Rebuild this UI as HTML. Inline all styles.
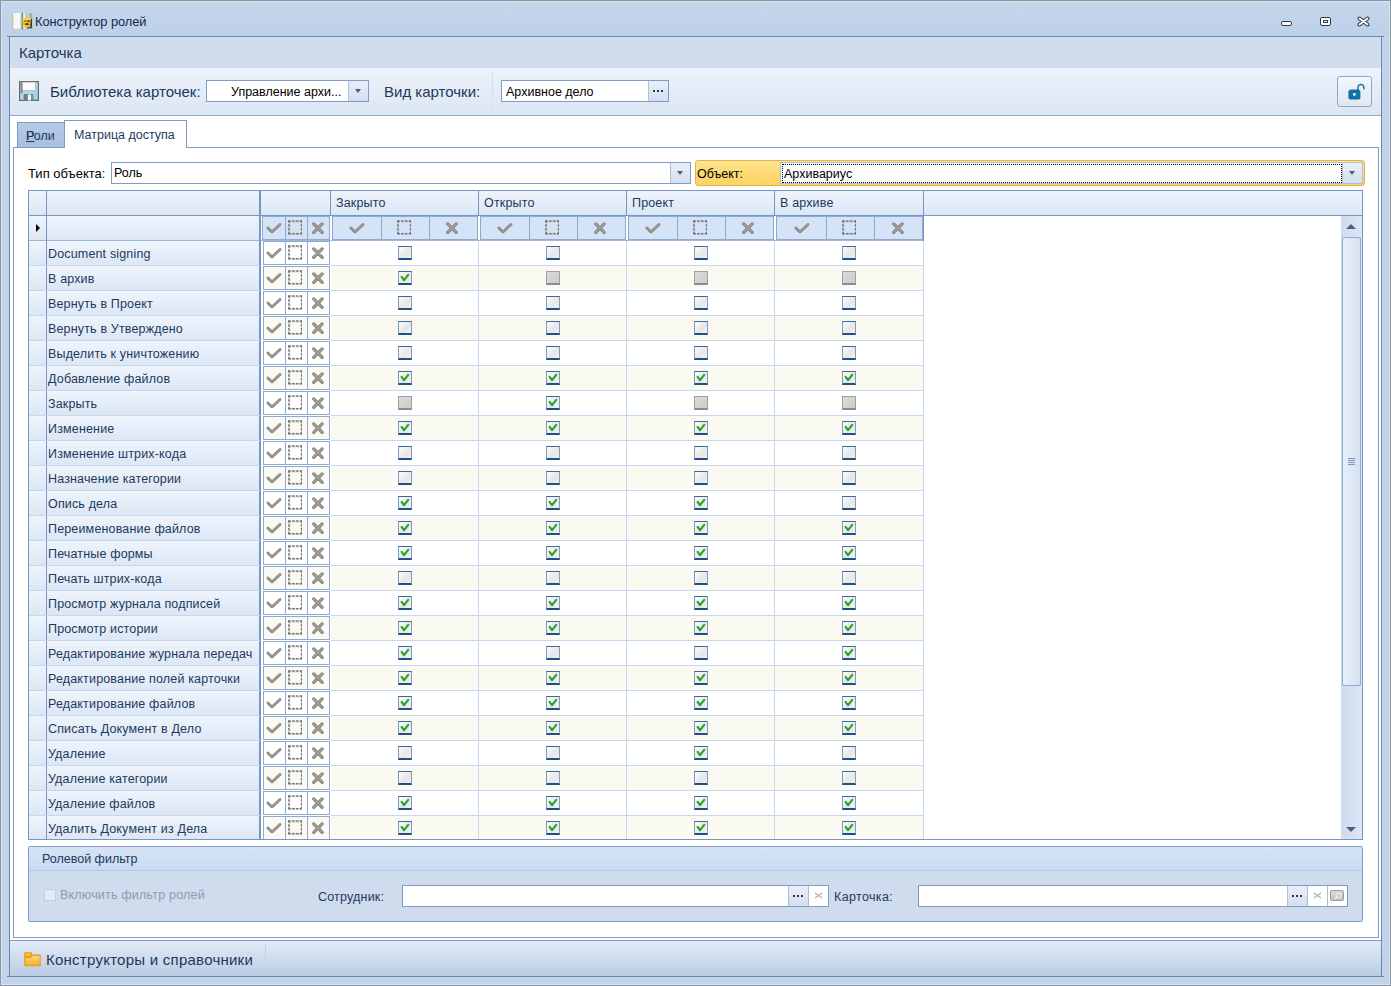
<!DOCTYPE html><html><head><meta charset="utf-8"><style>
*{box-sizing:border-box;margin:0;padding:0}
svg{display:block}
html,body{width:1391px;height:986px;overflow:hidden;background:#c4d5ea;font-family:"Liberation Sans",sans-serif;}
.a{position:absolute}
#win{position:absolute;left:0;top:0;width:1391px;height:986px;background:linear-gradient(#c6d7ed,#bcd0e8 36px,#c2d3ea 37px);}
#wb{position:absolute;left:0;top:0;width:1391px;height:986px;border:1px solid #8c959f;pointer-events:none}
.title{left:35px;top:14px;font-size:12.8px;color:#15294b;letter-spacing:-0.05px}
.frame{left:9px;top:36px;width:1373px;height:941px;border:1px solid #6886ae;border-right-color:#6886ae;background:#fff}
.hdr{left:10px;top:37px;width:1371px;height:31px;background:#d0ddef}
.tb{left:10px;top:68px;width:1371px;height:48px;background:linear-gradient(#eef3fb,#e4ecf7 50%,#dbe6f3);border-bottom:1px solid #8ba8cf}
.lbl15{font-size:15px;color:#1e395b}
.edit{background:#fff;border:1px solid #7f9cc6}
.btn{background:linear-gradient(#e9eff8,#d3dfef);border-left:1px solid #a9bfdc}
.tri{width:0;height:0;border-left:3.5px solid transparent;border-right:3.5px solid transparent;border-top:4px solid #4f5d83}
.grid{left:28px;top:190px;width:1335px;height:650px;background:#fff}
.gridb{left:28px;top:190px;width:1335px;height:650px;border:1px solid #7896c2}
.hcell{background:linear-gradient(#eef4fc,#dce7f5);}
.cb{position:absolute;display:block;width:14px;height:14px;border:1px solid #7d9cc2;border-top-color:#3d6796;border-bottom:2px solid #1f4f86;background:linear-gradient(135deg,#fdfdfd,#e6e6e6 60%,#f4f4f4);}
.cb.g{border-color:#a0a0a0;border-bottom-color:#8c8c8c;background:linear-gradient(135deg,#dcdcdc,#cbcbcb)}
.txt{font-size:12.5px;color:#1e395b;white-space:nowrap;letter-spacing:0.16px}
.dot{position:absolute;display:block;width:2px;height:2px;background:#2d3550}
</style></head><body><div id="win">
<div class="a" style="left:12px;top:12px;width:21px;height:19px"><svg width="21" height="19" viewBox="0 0 21 19"><path d="M0.5 1.5 L0.5 16.8 L9.8 17.2 L10.5 18 L11.2 17.2 L20.3 16.8 L20.3 1.5" fill="#d6ac3c"/><rect x="1.2" y="1" width="8.5" height="15.8" fill="#f2f8f6"/><rect x="8.2" y="1.5" width="1.5" height="15" fill="#c9dcda"/><rect x="9.6" y="0.5" width="1.4" height="16.5" fill="#6f8784"/><rect x="11" y="1" width="8.6" height="15.8" fill="#b8ccca"/><rect x="11.3" y="1" width="1.8" height="15.8" fill="#e9f2f1"/><rect x="18.2" y="1" width="1.4" height="15.8" fill="#8ea5a4"/><path d="M13.5 7 L20 7 L20 16 L15 16.5 Z" fill="#24384a"/><path d="M16.6 14.6 L18.8 13.6 L18.3 15.6 Z" fill="#cfe0e8"/><path d="M10.6 6 L18.8 6 L18.6 11 C18.2 14.5 15.5 16 14.5 16.2 C12.8 15.5 10.8 13.5 10.7 11 Z" fill="#f8c21a"/><path d="M10.6 6 L18.8 6 L18.7 8 L10.6 8 Z" fill="#ffd23a"/><rect x="12.2" y="8.3" width="2.2" height="1.6" fill="#8a7a4a"/><rect x="15.4" y="8.3" width="2.2" height="1.6" fill="#4a3a1a"/><rect x="13" y="11.3" width="3.8" height="1.6" rx="0.7" fill="#3a3428"/></svg></div>
<div class="a title">Конструктор ролей</div>
<div class="a" style="left:1281px;top:21px;width:11px;height:5px;border:1.5px solid #2f3b4d;border-radius:2px;background:#fff"></div>
<div class="a" style="left:1320px;top:17px;width:11px;height:9px;border:1.5px solid #2f3b4d;border-radius:2px;background:#fff"><div class="a" style="left:1.5px;top:1.5px;width:5px;height:3px;border:1px solid #2f3b4d;background:#fff"></div></div>
<div class="a" style="left:1357px;top:16px;width:13px;height:11px"><svg width="13" height="11" viewBox="0 0 13 11"><path d="M2.5 2.5 L10.5 8.5 M10.5 2.5 L2.5 8.5" stroke="#2f3b4d" stroke-width="4" stroke-linecap="round"/><path d="M2.5 2.5 L10.5 8.5 M10.5 2.5 L2.5 8.5" stroke="#fff" stroke-width="2" stroke-linecap="round"/></svg></div>
<div class="a frame"></div>
<div class="a hdr"></div>
<div class="a lbl15" style="left:19px;top:44px">Карточка</div>
<div class="a tb"></div>
<div class="a" style="left:19px;top:81px;width:20px;height:20px"><svg width="20" height="20" viewBox="0 0 20 20"><defs><linearGradient id="fl" x1="0" y1="0" x2="1" y2="1"><stop offset="0" stop-color="#c9e6ee"/><stop offset="1" stop-color="#8fd0e6"/></linearGradient></defs><rect x="0.6" y="0.6" width="18.8" height="18.8" fill="url(#fl)" stroke="#666b70" stroke-width="1.2"/><rect x="1.3" y="1.2" width="2.6" height="11" fill="#8a9096"/><rect x="3.6" y="1.1" width="12.6" height="8.2" fill="#fbfbfb" stroke="#9aa0a4" stroke-width="0.5"/><rect x="4.6" y="13" width="9.8" height="6.3" fill="#7d8a8f"/><rect x="5.2" y="13.6" width="3.6" height="5.7" fill="#6d7a80"/><rect x="8.8" y="13.6" width="3.2" height="5.7" fill="#f4f7f8"/></svg></div>
<div class="a lbl15" style="left:50px;top:83px">Библиотека карточек:</div>
<div class="a edit" style="left:206px;top:80px;width:163px;height:22px"></div>
<div class="a" style="left:231px;top:85px;font-size:12.5px;color:#000">Управление архи...</div>
<div class="a btn" style="left:348px;top:81px;width:20px;height:20px"><div class="a tri" style="left:6px;top:8px"></div></div>
<div class="a lbl15" style="left:384px;top:83px">Вид карточки:</div>
<div class="a" style="left:492px;top:72px;width:1px;height:40px;background:#d5dfec"></div>
<div class="a edit" style="left:501px;top:80px;width:168px;height:22px"></div>
<div class="a" style="left:506px;top:85px;font-size:12.5px;color:#000">Архивное дело</div>
<div class="a btn" style="left:648px;top:81px;width:20px;height:20px"><i class="dot" style="left:4px;top:9px"></i><i class="dot" style="left:8px;top:9px"></i><i class="dot" style="left:12px;top:9px"></i></div>
<div class="a" style="left:1337px;top:76px;width:35px;height:31px;border:1px solid #8ea7c6;border-radius:3px;background:linear-gradient(#f4f7fb,#dfe7f1)"><svg class="a" style="left:10px;top:6px" width="18" height="18" viewBox="0 0 18 18"><path d="M10 7 V4 A3 3 0 0 1 15.6 3 L16 5.8" fill="none" stroke="#1471a6" stroke-width="1.5" stroke-linecap="round"/><rect x="0.4" y="6.5" width="12" height="10" rx="2.6" fill="#1471a6"/><rect x="5" y="10.2" width="2.6" height="2.4" fill="#f4f8fb"/></svg></div>
<div class="a" style="left:17px;top:122px;width:48px;height:26px;background:linear-gradient(#b7cbe6,#a6bedf);border:1px solid #7f9cc6;border-bottom:none"></div>
<div class="a" style="left:26px;top:129px;font-size:12.5px;color:#1e395b;text-decoration:underline">Р</div><div class="a" style="left:26px;top:129px;font-size:12.5px;color:#1e395b">Роли</div>
<div class="a" style="left:13px;top:147px;width:1366px;height:791px;border:1px solid #7f9cc6;background:#fff"></div>
<div class="a" style="left:64px;top:120px;width:123px;height:28px;background:#fff;border:1px solid #7f9cc6;border-bottom:none"></div>
<div class="a" style="left:74px;top:128px;font-size:12.5px;color:#1e395b">Матрица доступа</div>
<div class="a" style="left:28px;top:166px;font-size:13px;color:#000">Тип объекта:</div>
<div class="a edit" style="left:111px;top:162px;width:580px;height:22px"></div>
<div class="a" style="left:114px;top:166px;font-size:12.5px;color:#000">Роль</div>
<div class="a btn" style="left:670px;top:163px;width:20px;height:20px"><div class="a tri" style="left:6px;top:8px"></div></div>
<div class="a" style="left:695px;top:160px;width:670px;height:26px;border:1px solid #e2b348;border-radius:3px;background:linear-gradient(#fee595,#fdd96e 55%,#fcd466)"></div>
<div class="a" style="left:697px;top:167px;font-size:12.5px;color:#000">Объект:</div>
<div class="a edit" style="left:780px;top:162px;width:583px;height:22px;border-color:#a8c0de"></div>
<div class="a" style="left:782px;top:164px;width:560px;height:19px;border:1px dotted #000"></div>
<div class="a" style="left:784px;top:167px;font-size:12.5px;color:#000">Архивариус</div>
<div class="a btn" style="left:1342px;top:163px;width:20px;height:20px"><div class="a tri" style="left:6px;top:8px"></div></div>
<div class="a grid"></div>
<div class="a hcell" style="left:29px;top:191px;width:1333px;height:24px"></div>
<div class="a" style="left:29px;top:215px;width:1333px;height:1px;background:#7896c2"></div>
<div class="a hcell" style="left:29px;top:216px;width:231px;height:24px"></div>
<div class="a" style="left:29px;top:240px;width:894px;height:1px;background:#9fb8da"></div>
<div class="a" style="left:36px;top:224px;width:0;height:0;border-top:4.5px solid transparent;border-bottom:4.5px solid transparent;border-left:4.5px solid #000"></div>
<div class="a" style="left:46px;top:191px;width:1px;height:648px;background:#7896c2"></div>
<div class="a" style="left:259px;top:191px;width:2px;height:648px;background:#7896c2"></div>
<div class="a" style="left:330px;top:191px;width:1px;height:25px;background:#7896c2"></div>
<div class="a" style="left:478px;top:191px;width:1px;height:25px;background:#7896c2"></div>
<div class="a" style="left:626px;top:191px;width:1px;height:25px;background:#7896c2"></div>
<div class="a" style="left:774px;top:191px;width:1px;height:25px;background:#7896c2"></div>
<div class="a" style="left:923px;top:191px;width:1px;height:25px;background:#7896c2"></div>
<div class="a txt" style="left:336px;top:196px">Закрыто</div>
<div class="a txt" style="left:484px;top:196px">Открыто</div>
<div class="a txt" style="left:632px;top:196px">Проект</div>
<div class="a txt" style="left:780px;top:196px">В архиве</div>
<div class="a" style="left:262px;top:216px;width:68px;height:24px;border:1px solid #8eaad0;background:#d5e3f6"></div>
<div class="a" style="left:285px;top:217px;width:1px;height:22px;background:#8eaad0"></div>
<div class="a" style="left:307px;top:217px;width:1px;height:22px;background:#8eaad0"></div>
<div class="a" style="left:262px;top:216px"><svg width="20" height="20" viewBox="0 0 20 20"><path d="M5.9 12 L10 15.9 L18 8.5" fill="none" stroke="#7f7c77" stroke-width="2.7" stroke-linecap="round" stroke-linejoin="round"/><path d="M5.9 12 L10 15.9 L18 8.5" fill="none" stroke="#a19e99" stroke-width="1.3" stroke-linecap="round" stroke-linejoin="round"/></svg></div><div class="a" style="left:282px;top:216px"><svg width="20" height="20" viewBox="0 0 20 20"><g fill="#aeb3ba" opacity="0.7"><rect x="6.90" y="5.00" width="2.6" height="1.4"/><rect x="6.90" y="17.60" width="2.6" height="1.4"/><rect x="6.90" y="5.00" width="1.4" height="2.6"/><rect x="19.50" y="5.00" width="1.4" height="2.6"/><rect x="10.70" y="5.00" width="2.6" height="1.4"/><rect x="10.70" y="17.60" width="2.6" height="1.4"/><rect x="6.90" y="8.80" width="1.4" height="2.6"/><rect x="19.50" y="8.80" width="1.4" height="2.6"/><rect x="14.50" y="5.00" width="2.6" height="1.4"/><rect x="14.50" y="17.60" width="2.6" height="1.4"/><rect x="6.90" y="12.60" width="1.4" height="2.6"/><rect x="19.50" y="12.60" width="1.4" height="2.6"/><rect x="18.30" y="5.00" width="2.6" height="1.4"/><rect x="18.30" y="17.60" width="2.6" height="1.4"/><rect x="6.90" y="16.40" width="1.4" height="2.6"/><rect x="19.50" y="16.40" width="1.4" height="2.6"/></g><g fill="#747474" opacity="1"><rect x="6.20" y="4.30" width="2.6" height="1.35"/><rect x="6.20" y="16.95" width="2.6" height="1.35"/><rect x="6.20" y="4.30" width="1.35" height="2.6"/><rect x="18.85" y="4.30" width="1.35" height="2.6"/><rect x="10.00" y="4.30" width="2.6" height="1.35"/><rect x="10.00" y="16.95" width="2.6" height="1.35"/><rect x="6.20" y="8.10" width="1.35" height="2.6"/><rect x="18.85" y="8.10" width="1.35" height="2.6"/><rect x="13.80" y="4.30" width="2.6" height="1.35"/><rect x="13.80" y="16.95" width="2.6" height="1.35"/><rect x="6.20" y="11.90" width="1.35" height="2.6"/><rect x="18.85" y="11.90" width="1.35" height="2.6"/><rect x="17.60" y="4.30" width="2.6" height="1.35"/><rect x="17.60" y="16.95" width="2.6" height="1.35"/><rect x="6.20" y="15.70" width="1.35" height="2.6"/><rect x="18.85" y="15.70" width="1.35" height="2.6"/></g></svg></div><div class="a" style="left:306px;top:216px"><svg width="20" height="20" viewBox="0 0 20 20"><path d="M7.7 7.9 L16.2 16.3 M16.2 7.9 L7.7 16.3" fill="none" stroke="#7d7b78" stroke-width="3.2" stroke-linecap="round"/><path d="M7.7 7.9 L16.2 16.3 M16.2 7.9 L7.7 16.3" fill="none" stroke="#a3a19d" stroke-width="1.6" stroke-linecap="round"/></svg></div>
<div class="a" style="left:332px;top:216px;width:146px;height:24px;border:1px solid #8eaad0;background:#d5e3f6"></div>
<div class="a" style="left:381px;top:217px;width:1px;height:22px;background:#8eaad0"></div>
<div class="a" style="left:429px;top:217px;width:1px;height:22px;background:#8eaad0"></div>
<div class="a" style="left:345px;top:216px"><svg width="20" height="20" viewBox="0 0 20 20"><path d="M5.9 12 L10 15.9 L18 8.5" fill="none" stroke="#7f7c77" stroke-width="2.7" stroke-linecap="round" stroke-linejoin="round"/><path d="M5.9 12 L10 15.9 L18 8.5" fill="none" stroke="#a19e99" stroke-width="1.3" stroke-linecap="round" stroke-linejoin="round"/></svg></div>
<div class="a" style="left:391px;top:216px"><svg width="20" height="20" viewBox="0 0 20 20"><g fill="#aeb3ba" opacity="0.7"><rect x="6.90" y="5.00" width="2.6" height="1.4"/><rect x="6.90" y="17.60" width="2.6" height="1.4"/><rect x="6.90" y="5.00" width="1.4" height="2.6"/><rect x="19.50" y="5.00" width="1.4" height="2.6"/><rect x="10.70" y="5.00" width="2.6" height="1.4"/><rect x="10.70" y="17.60" width="2.6" height="1.4"/><rect x="6.90" y="8.80" width="1.4" height="2.6"/><rect x="19.50" y="8.80" width="1.4" height="2.6"/><rect x="14.50" y="5.00" width="2.6" height="1.4"/><rect x="14.50" y="17.60" width="2.6" height="1.4"/><rect x="6.90" y="12.60" width="1.4" height="2.6"/><rect x="19.50" y="12.60" width="1.4" height="2.6"/><rect x="18.30" y="5.00" width="2.6" height="1.4"/><rect x="18.30" y="17.60" width="2.6" height="1.4"/><rect x="6.90" y="16.40" width="1.4" height="2.6"/><rect x="19.50" y="16.40" width="1.4" height="2.6"/></g><g fill="#747474" opacity="1"><rect x="6.20" y="4.30" width="2.6" height="1.35"/><rect x="6.20" y="16.95" width="2.6" height="1.35"/><rect x="6.20" y="4.30" width="1.35" height="2.6"/><rect x="18.85" y="4.30" width="1.35" height="2.6"/><rect x="10.00" y="4.30" width="2.6" height="1.35"/><rect x="10.00" y="16.95" width="2.6" height="1.35"/><rect x="6.20" y="8.10" width="1.35" height="2.6"/><rect x="18.85" y="8.10" width="1.35" height="2.6"/><rect x="13.80" y="4.30" width="2.6" height="1.35"/><rect x="13.80" y="16.95" width="2.6" height="1.35"/><rect x="6.20" y="11.90" width="1.35" height="2.6"/><rect x="18.85" y="11.90" width="1.35" height="2.6"/><rect x="17.60" y="4.30" width="2.6" height="1.35"/><rect x="17.60" y="16.95" width="2.6" height="1.35"/><rect x="6.20" y="15.70" width="1.35" height="2.6"/><rect x="18.85" y="15.70" width="1.35" height="2.6"/></g></svg></div>
<div class="a" style="left:440px;top:216px"><svg width="20" height="20" viewBox="0 0 20 20"><path d="M7.7 7.9 L16.2 16.3 M16.2 7.9 L7.7 16.3" fill="none" stroke="#7d7b78" stroke-width="3.2" stroke-linecap="round"/><path d="M7.7 7.9 L16.2 16.3 M16.2 7.9 L7.7 16.3" fill="none" stroke="#a3a19d" stroke-width="1.6" stroke-linecap="round"/></svg></div>
<div class="a" style="left:480px;top:216px;width:146px;height:24px;border:1px solid #8eaad0;background:#d5e3f6"></div>
<div class="a" style="left:529px;top:217px;width:1px;height:22px;background:#8eaad0"></div>
<div class="a" style="left:577px;top:217px;width:1px;height:22px;background:#8eaad0"></div>
<div class="a" style="left:493px;top:216px"><svg width="20" height="20" viewBox="0 0 20 20"><path d="M5.9 12 L10 15.9 L18 8.5" fill="none" stroke="#7f7c77" stroke-width="2.7" stroke-linecap="round" stroke-linejoin="round"/><path d="M5.9 12 L10 15.9 L18 8.5" fill="none" stroke="#a19e99" stroke-width="1.3" stroke-linecap="round" stroke-linejoin="round"/></svg></div>
<div class="a" style="left:539px;top:216px"><svg width="20" height="20" viewBox="0 0 20 20"><g fill="#aeb3ba" opacity="0.7"><rect x="6.90" y="5.00" width="2.6" height="1.4"/><rect x="6.90" y="17.60" width="2.6" height="1.4"/><rect x="6.90" y="5.00" width="1.4" height="2.6"/><rect x="19.50" y="5.00" width="1.4" height="2.6"/><rect x="10.70" y="5.00" width="2.6" height="1.4"/><rect x="10.70" y="17.60" width="2.6" height="1.4"/><rect x="6.90" y="8.80" width="1.4" height="2.6"/><rect x="19.50" y="8.80" width="1.4" height="2.6"/><rect x="14.50" y="5.00" width="2.6" height="1.4"/><rect x="14.50" y="17.60" width="2.6" height="1.4"/><rect x="6.90" y="12.60" width="1.4" height="2.6"/><rect x="19.50" y="12.60" width="1.4" height="2.6"/><rect x="18.30" y="5.00" width="2.6" height="1.4"/><rect x="18.30" y="17.60" width="2.6" height="1.4"/><rect x="6.90" y="16.40" width="1.4" height="2.6"/><rect x="19.50" y="16.40" width="1.4" height="2.6"/></g><g fill="#747474" opacity="1"><rect x="6.20" y="4.30" width="2.6" height="1.35"/><rect x="6.20" y="16.95" width="2.6" height="1.35"/><rect x="6.20" y="4.30" width="1.35" height="2.6"/><rect x="18.85" y="4.30" width="1.35" height="2.6"/><rect x="10.00" y="4.30" width="2.6" height="1.35"/><rect x="10.00" y="16.95" width="2.6" height="1.35"/><rect x="6.20" y="8.10" width="1.35" height="2.6"/><rect x="18.85" y="8.10" width="1.35" height="2.6"/><rect x="13.80" y="4.30" width="2.6" height="1.35"/><rect x="13.80" y="16.95" width="2.6" height="1.35"/><rect x="6.20" y="11.90" width="1.35" height="2.6"/><rect x="18.85" y="11.90" width="1.35" height="2.6"/><rect x="17.60" y="4.30" width="2.6" height="1.35"/><rect x="17.60" y="16.95" width="2.6" height="1.35"/><rect x="6.20" y="15.70" width="1.35" height="2.6"/><rect x="18.85" y="15.70" width="1.35" height="2.6"/></g></svg></div>
<div class="a" style="left:588px;top:216px"><svg width="20" height="20" viewBox="0 0 20 20"><path d="M7.7 7.9 L16.2 16.3 M16.2 7.9 L7.7 16.3" fill="none" stroke="#7d7b78" stroke-width="3.2" stroke-linecap="round"/><path d="M7.7 7.9 L16.2 16.3 M16.2 7.9 L7.7 16.3" fill="none" stroke="#a3a19d" stroke-width="1.6" stroke-linecap="round"/></svg></div>
<div class="a" style="left:628px;top:216px;width:146px;height:24px;border:1px solid #8eaad0;background:#d5e3f6"></div>
<div class="a" style="left:677px;top:217px;width:1px;height:22px;background:#8eaad0"></div>
<div class="a" style="left:725px;top:217px;width:1px;height:22px;background:#8eaad0"></div>
<div class="a" style="left:641px;top:216px"><svg width="20" height="20" viewBox="0 0 20 20"><path d="M5.9 12 L10 15.9 L18 8.5" fill="none" stroke="#7f7c77" stroke-width="2.7" stroke-linecap="round" stroke-linejoin="round"/><path d="M5.9 12 L10 15.9 L18 8.5" fill="none" stroke="#a19e99" stroke-width="1.3" stroke-linecap="round" stroke-linejoin="round"/></svg></div>
<div class="a" style="left:687px;top:216px"><svg width="20" height="20" viewBox="0 0 20 20"><g fill="#aeb3ba" opacity="0.7"><rect x="6.90" y="5.00" width="2.6" height="1.4"/><rect x="6.90" y="17.60" width="2.6" height="1.4"/><rect x="6.90" y="5.00" width="1.4" height="2.6"/><rect x="19.50" y="5.00" width="1.4" height="2.6"/><rect x="10.70" y="5.00" width="2.6" height="1.4"/><rect x="10.70" y="17.60" width="2.6" height="1.4"/><rect x="6.90" y="8.80" width="1.4" height="2.6"/><rect x="19.50" y="8.80" width="1.4" height="2.6"/><rect x="14.50" y="5.00" width="2.6" height="1.4"/><rect x="14.50" y="17.60" width="2.6" height="1.4"/><rect x="6.90" y="12.60" width="1.4" height="2.6"/><rect x="19.50" y="12.60" width="1.4" height="2.6"/><rect x="18.30" y="5.00" width="2.6" height="1.4"/><rect x="18.30" y="17.60" width="2.6" height="1.4"/><rect x="6.90" y="16.40" width="1.4" height="2.6"/><rect x="19.50" y="16.40" width="1.4" height="2.6"/></g><g fill="#747474" opacity="1"><rect x="6.20" y="4.30" width="2.6" height="1.35"/><rect x="6.20" y="16.95" width="2.6" height="1.35"/><rect x="6.20" y="4.30" width="1.35" height="2.6"/><rect x="18.85" y="4.30" width="1.35" height="2.6"/><rect x="10.00" y="4.30" width="2.6" height="1.35"/><rect x="10.00" y="16.95" width="2.6" height="1.35"/><rect x="6.20" y="8.10" width="1.35" height="2.6"/><rect x="18.85" y="8.10" width="1.35" height="2.6"/><rect x="13.80" y="4.30" width="2.6" height="1.35"/><rect x="13.80" y="16.95" width="2.6" height="1.35"/><rect x="6.20" y="11.90" width="1.35" height="2.6"/><rect x="18.85" y="11.90" width="1.35" height="2.6"/><rect x="17.60" y="4.30" width="2.6" height="1.35"/><rect x="17.60" y="16.95" width="2.6" height="1.35"/><rect x="6.20" y="15.70" width="1.35" height="2.6"/><rect x="18.85" y="15.70" width="1.35" height="2.6"/></g></svg></div>
<div class="a" style="left:736px;top:216px"><svg width="20" height="20" viewBox="0 0 20 20"><path d="M7.7 7.9 L16.2 16.3 M16.2 7.9 L7.7 16.3" fill="none" stroke="#7d7b78" stroke-width="3.2" stroke-linecap="round"/><path d="M7.7 7.9 L16.2 16.3 M16.2 7.9 L7.7 16.3" fill="none" stroke="#a3a19d" stroke-width="1.6" stroke-linecap="round"/></svg></div>
<div class="a" style="left:776px;top:216px;width:147px;height:24px;border:1px solid #8eaad0;background:#d5e3f6"></div>
<div class="a" style="left:826px;top:217px;width:1px;height:22px;background:#8eaad0"></div>
<div class="a" style="left:874px;top:217px;width:1px;height:22px;background:#8eaad0"></div>
<div class="a" style="left:790px;top:216px"><svg width="20" height="20" viewBox="0 0 20 20"><path d="M5.9 12 L10 15.9 L18 8.5" fill="none" stroke="#7f7c77" stroke-width="2.7" stroke-linecap="round" stroke-linejoin="round"/><path d="M5.9 12 L10 15.9 L18 8.5" fill="none" stroke="#a19e99" stroke-width="1.3" stroke-linecap="round" stroke-linejoin="round"/></svg></div>
<div class="a" style="left:836px;top:216px"><svg width="20" height="20" viewBox="0 0 20 20"><g fill="#aeb3ba" opacity="0.7"><rect x="6.90" y="5.00" width="2.6" height="1.4"/><rect x="6.90" y="17.60" width="2.6" height="1.4"/><rect x="6.90" y="5.00" width="1.4" height="2.6"/><rect x="19.50" y="5.00" width="1.4" height="2.6"/><rect x="10.70" y="5.00" width="2.6" height="1.4"/><rect x="10.70" y="17.60" width="2.6" height="1.4"/><rect x="6.90" y="8.80" width="1.4" height="2.6"/><rect x="19.50" y="8.80" width="1.4" height="2.6"/><rect x="14.50" y="5.00" width="2.6" height="1.4"/><rect x="14.50" y="17.60" width="2.6" height="1.4"/><rect x="6.90" y="12.60" width="1.4" height="2.6"/><rect x="19.50" y="12.60" width="1.4" height="2.6"/><rect x="18.30" y="5.00" width="2.6" height="1.4"/><rect x="18.30" y="17.60" width="2.6" height="1.4"/><rect x="6.90" y="16.40" width="1.4" height="2.6"/><rect x="19.50" y="16.40" width="1.4" height="2.6"/></g><g fill="#747474" opacity="1"><rect x="6.20" y="4.30" width="2.6" height="1.35"/><rect x="6.20" y="16.95" width="2.6" height="1.35"/><rect x="6.20" y="4.30" width="1.35" height="2.6"/><rect x="18.85" y="4.30" width="1.35" height="2.6"/><rect x="10.00" y="4.30" width="2.6" height="1.35"/><rect x="10.00" y="16.95" width="2.6" height="1.35"/><rect x="6.20" y="8.10" width="1.35" height="2.6"/><rect x="18.85" y="8.10" width="1.35" height="2.6"/><rect x="13.80" y="4.30" width="2.6" height="1.35"/><rect x="13.80" y="16.95" width="2.6" height="1.35"/><rect x="6.20" y="11.90" width="1.35" height="2.6"/><rect x="18.85" y="11.90" width="1.35" height="2.6"/><rect x="17.60" y="4.30" width="2.6" height="1.35"/><rect x="17.60" y="16.95" width="2.6" height="1.35"/><rect x="6.20" y="15.70" width="1.35" height="2.6"/><rect x="18.85" y="15.70" width="1.35" height="2.6"/></g></svg></div>
<div class="a" style="left:886px;top:216px"><svg width="20" height="20" viewBox="0 0 20 20"><path d="M7.7 7.9 L16.2 16.3 M16.2 7.9 L7.7 16.3" fill="none" stroke="#7d7b78" stroke-width="3.2" stroke-linecap="round"/><path d="M7.7 7.9 L16.2 16.3 M16.2 7.9 L7.7 16.3" fill="none" stroke="#a3a19d" stroke-width="1.6" stroke-linecap="round"/></svg></div>
<div class="a hcell" style="left:29px;top:241px;width:17px;height:24px"></div>
<div class="a hcell" style="left:47px;top:241px;width:212px;height:24px"></div>
<div class="a txt" style="left:48px;top:247px">Document signing</div>
<div class="a" style="left:331px;top:241px;width:592px;height:24px;background:#fff"></div>
<div class="a" style="left:263px;top:241px;width:67px;height:24px;border:1px solid #8eaad0;background:#fff"></div>
<div class="a" style="left:285px;top:241px;width:1px;height:24px;background:#8eaad0"></div>
<div class="a" style="left:307px;top:241px;width:1px;height:24px;background:#8eaad0"></div>
<div class="a" style="left:262px;top:241px"><svg width="20" height="20" viewBox="0 0 20 20"><path d="M5.9 12 L10 15.9 L18 8.5" fill="none" stroke="#7f7c77" stroke-width="2.7" stroke-linecap="round" stroke-linejoin="round"/><path d="M5.9 12 L10 15.9 L18 8.5" fill="none" stroke="#a19e99" stroke-width="1.3" stroke-linecap="round" stroke-linejoin="round"/></svg></div><div class="a" style="left:282px;top:241px"><svg width="20" height="20" viewBox="0 0 20 20"><g fill="#aeb3ba" opacity="0.7"><rect x="6.90" y="5.00" width="2.6" height="1.4"/><rect x="6.90" y="17.60" width="2.6" height="1.4"/><rect x="6.90" y="5.00" width="1.4" height="2.6"/><rect x="19.50" y="5.00" width="1.4" height="2.6"/><rect x="10.70" y="5.00" width="2.6" height="1.4"/><rect x="10.70" y="17.60" width="2.6" height="1.4"/><rect x="6.90" y="8.80" width="1.4" height="2.6"/><rect x="19.50" y="8.80" width="1.4" height="2.6"/><rect x="14.50" y="5.00" width="2.6" height="1.4"/><rect x="14.50" y="17.60" width="2.6" height="1.4"/><rect x="6.90" y="12.60" width="1.4" height="2.6"/><rect x="19.50" y="12.60" width="1.4" height="2.6"/><rect x="18.30" y="5.00" width="2.6" height="1.4"/><rect x="18.30" y="17.60" width="2.6" height="1.4"/><rect x="6.90" y="16.40" width="1.4" height="2.6"/><rect x="19.50" y="16.40" width="1.4" height="2.6"/></g><g fill="#747474" opacity="1"><rect x="6.20" y="4.30" width="2.6" height="1.35"/><rect x="6.20" y="16.95" width="2.6" height="1.35"/><rect x="6.20" y="4.30" width="1.35" height="2.6"/><rect x="18.85" y="4.30" width="1.35" height="2.6"/><rect x="10.00" y="4.30" width="2.6" height="1.35"/><rect x="10.00" y="16.95" width="2.6" height="1.35"/><rect x="6.20" y="8.10" width="1.35" height="2.6"/><rect x="18.85" y="8.10" width="1.35" height="2.6"/><rect x="13.80" y="4.30" width="2.6" height="1.35"/><rect x="13.80" y="16.95" width="2.6" height="1.35"/><rect x="6.20" y="11.90" width="1.35" height="2.6"/><rect x="18.85" y="11.90" width="1.35" height="2.6"/><rect x="17.60" y="4.30" width="2.6" height="1.35"/><rect x="17.60" y="16.95" width="2.6" height="1.35"/><rect x="6.20" y="15.70" width="1.35" height="2.6"/><rect x="18.85" y="15.70" width="1.35" height="2.6"/></g></svg></div><div class="a" style="left:306px;top:241px"><svg width="20" height="20" viewBox="0 0 20 20"><path d="M7.7 7.9 L16.2 16.3 M16.2 7.9 L7.7 16.3" fill="none" stroke="#7d7b78" stroke-width="3.2" stroke-linecap="round"/><path d="M7.7 7.9 L16.2 16.3 M16.2 7.9 L7.7 16.3" fill="none" stroke="#a3a19d" stroke-width="1.6" stroke-linecap="round"/></svg></div>
<i class="cb" style="left:398px;top:246px"></i>
<i class="cb" style="left:546px;top:246px"></i>
<i class="cb" style="left:694px;top:246px"></i>
<i class="cb" style="left:842px;top:246px"></i>
<div class="a" style="left:29px;top:265px;width:231px;height:1px;background:#c5d6ee"></div>
<div class="a" style="left:331px;top:265px;width:593px;height:1px;background:#c5d8f1"></div>
<div class="a hcell" style="left:29px;top:266px;width:17px;height:24px"></div>
<div class="a hcell" style="left:47px;top:266px;width:212px;height:24px"></div>
<div class="a txt" style="left:48px;top:272px">В архив</div>
<div class="a" style="left:331px;top:266px;width:592px;height:24px;background:#faf9f2"></div>
<div class="a" style="left:263px;top:266px;width:67px;height:24px;border:1px solid #8eaad0;background:#faf9f2"></div>
<div class="a" style="left:285px;top:266px;width:1px;height:24px;background:#8eaad0"></div>
<div class="a" style="left:307px;top:266px;width:1px;height:24px;background:#8eaad0"></div>
<div class="a" style="left:262px;top:266px"><svg width="20" height="20" viewBox="0 0 20 20"><path d="M5.9 12 L10 15.9 L18 8.5" fill="none" stroke="#7f7c77" stroke-width="2.7" stroke-linecap="round" stroke-linejoin="round"/><path d="M5.9 12 L10 15.9 L18 8.5" fill="none" stroke="#a19e99" stroke-width="1.3" stroke-linecap="round" stroke-linejoin="round"/></svg></div><div class="a" style="left:282px;top:266px"><svg width="20" height="20" viewBox="0 0 20 20"><g fill="#aeb3ba" opacity="0.7"><rect x="6.90" y="5.00" width="2.6" height="1.4"/><rect x="6.90" y="17.60" width="2.6" height="1.4"/><rect x="6.90" y="5.00" width="1.4" height="2.6"/><rect x="19.50" y="5.00" width="1.4" height="2.6"/><rect x="10.70" y="5.00" width="2.6" height="1.4"/><rect x="10.70" y="17.60" width="2.6" height="1.4"/><rect x="6.90" y="8.80" width="1.4" height="2.6"/><rect x="19.50" y="8.80" width="1.4" height="2.6"/><rect x="14.50" y="5.00" width="2.6" height="1.4"/><rect x="14.50" y="17.60" width="2.6" height="1.4"/><rect x="6.90" y="12.60" width="1.4" height="2.6"/><rect x="19.50" y="12.60" width="1.4" height="2.6"/><rect x="18.30" y="5.00" width="2.6" height="1.4"/><rect x="18.30" y="17.60" width="2.6" height="1.4"/><rect x="6.90" y="16.40" width="1.4" height="2.6"/><rect x="19.50" y="16.40" width="1.4" height="2.6"/></g><g fill="#747474" opacity="1"><rect x="6.20" y="4.30" width="2.6" height="1.35"/><rect x="6.20" y="16.95" width="2.6" height="1.35"/><rect x="6.20" y="4.30" width="1.35" height="2.6"/><rect x="18.85" y="4.30" width="1.35" height="2.6"/><rect x="10.00" y="4.30" width="2.6" height="1.35"/><rect x="10.00" y="16.95" width="2.6" height="1.35"/><rect x="6.20" y="8.10" width="1.35" height="2.6"/><rect x="18.85" y="8.10" width="1.35" height="2.6"/><rect x="13.80" y="4.30" width="2.6" height="1.35"/><rect x="13.80" y="16.95" width="2.6" height="1.35"/><rect x="6.20" y="11.90" width="1.35" height="2.6"/><rect x="18.85" y="11.90" width="1.35" height="2.6"/><rect x="17.60" y="4.30" width="2.6" height="1.35"/><rect x="17.60" y="16.95" width="2.6" height="1.35"/><rect x="6.20" y="15.70" width="1.35" height="2.6"/><rect x="18.85" y="15.70" width="1.35" height="2.6"/></g></svg></div><div class="a" style="left:306px;top:266px"><svg width="20" height="20" viewBox="0 0 20 20"><path d="M7.7 7.9 L16.2 16.3 M16.2 7.9 L7.7 16.3" fill="none" stroke="#7d7b78" stroke-width="3.2" stroke-linecap="round"/><path d="M7.7 7.9 L16.2 16.3 M16.2 7.9 L7.7 16.3" fill="none" stroke="#a3a19d" stroke-width="1.6" stroke-linecap="round"/></svg></div>
<i class="cb" style="left:398px;top:271px"></i><div class="a" style="left:398px;top:271px"><svg width="14" height="14" viewBox="0 0 14 14"><path d="M3.6 5.8 L6 9.2 L10.2 3.9" fill="none" stroke="#22a322" stroke-width="2" stroke-linecap="round" stroke-linejoin="round"/></svg></div>
<i class="cb g" style="left:546px;top:271px"></i>
<i class="cb g" style="left:694px;top:271px"></i>
<i class="cb g" style="left:842px;top:271px"></i>
<div class="a" style="left:29px;top:290px;width:231px;height:1px;background:#c5d6ee"></div>
<div class="a" style="left:331px;top:290px;width:593px;height:1px;background:#c5d8f1"></div>
<div class="a hcell" style="left:29px;top:291px;width:17px;height:24px"></div>
<div class="a hcell" style="left:47px;top:291px;width:212px;height:24px"></div>
<div class="a txt" style="left:48px;top:297px">Вернуть в Проект</div>
<div class="a" style="left:331px;top:291px;width:592px;height:24px;background:#fff"></div>
<div class="a" style="left:263px;top:291px;width:67px;height:24px;border:1px solid #8eaad0;background:#fff"></div>
<div class="a" style="left:285px;top:291px;width:1px;height:24px;background:#8eaad0"></div>
<div class="a" style="left:307px;top:291px;width:1px;height:24px;background:#8eaad0"></div>
<div class="a" style="left:262px;top:291px"><svg width="20" height="20" viewBox="0 0 20 20"><path d="M5.9 12 L10 15.9 L18 8.5" fill="none" stroke="#7f7c77" stroke-width="2.7" stroke-linecap="round" stroke-linejoin="round"/><path d="M5.9 12 L10 15.9 L18 8.5" fill="none" stroke="#a19e99" stroke-width="1.3" stroke-linecap="round" stroke-linejoin="round"/></svg></div><div class="a" style="left:282px;top:291px"><svg width="20" height="20" viewBox="0 0 20 20"><g fill="#aeb3ba" opacity="0.7"><rect x="6.90" y="5.00" width="2.6" height="1.4"/><rect x="6.90" y="17.60" width="2.6" height="1.4"/><rect x="6.90" y="5.00" width="1.4" height="2.6"/><rect x="19.50" y="5.00" width="1.4" height="2.6"/><rect x="10.70" y="5.00" width="2.6" height="1.4"/><rect x="10.70" y="17.60" width="2.6" height="1.4"/><rect x="6.90" y="8.80" width="1.4" height="2.6"/><rect x="19.50" y="8.80" width="1.4" height="2.6"/><rect x="14.50" y="5.00" width="2.6" height="1.4"/><rect x="14.50" y="17.60" width="2.6" height="1.4"/><rect x="6.90" y="12.60" width="1.4" height="2.6"/><rect x="19.50" y="12.60" width="1.4" height="2.6"/><rect x="18.30" y="5.00" width="2.6" height="1.4"/><rect x="18.30" y="17.60" width="2.6" height="1.4"/><rect x="6.90" y="16.40" width="1.4" height="2.6"/><rect x="19.50" y="16.40" width="1.4" height="2.6"/></g><g fill="#747474" opacity="1"><rect x="6.20" y="4.30" width="2.6" height="1.35"/><rect x="6.20" y="16.95" width="2.6" height="1.35"/><rect x="6.20" y="4.30" width="1.35" height="2.6"/><rect x="18.85" y="4.30" width="1.35" height="2.6"/><rect x="10.00" y="4.30" width="2.6" height="1.35"/><rect x="10.00" y="16.95" width="2.6" height="1.35"/><rect x="6.20" y="8.10" width="1.35" height="2.6"/><rect x="18.85" y="8.10" width="1.35" height="2.6"/><rect x="13.80" y="4.30" width="2.6" height="1.35"/><rect x="13.80" y="16.95" width="2.6" height="1.35"/><rect x="6.20" y="11.90" width="1.35" height="2.6"/><rect x="18.85" y="11.90" width="1.35" height="2.6"/><rect x="17.60" y="4.30" width="2.6" height="1.35"/><rect x="17.60" y="16.95" width="2.6" height="1.35"/><rect x="6.20" y="15.70" width="1.35" height="2.6"/><rect x="18.85" y="15.70" width="1.35" height="2.6"/></g></svg></div><div class="a" style="left:306px;top:291px"><svg width="20" height="20" viewBox="0 0 20 20"><path d="M7.7 7.9 L16.2 16.3 M16.2 7.9 L7.7 16.3" fill="none" stroke="#7d7b78" stroke-width="3.2" stroke-linecap="round"/><path d="M7.7 7.9 L16.2 16.3 M16.2 7.9 L7.7 16.3" fill="none" stroke="#a3a19d" stroke-width="1.6" stroke-linecap="round"/></svg></div>
<i class="cb" style="left:398px;top:296px"></i>
<i class="cb" style="left:546px;top:296px"></i>
<i class="cb" style="left:694px;top:296px"></i>
<i class="cb" style="left:842px;top:296px"></i>
<div class="a" style="left:29px;top:315px;width:231px;height:1px;background:#c5d6ee"></div>
<div class="a" style="left:331px;top:315px;width:593px;height:1px;background:#c5d8f1"></div>
<div class="a hcell" style="left:29px;top:316px;width:17px;height:24px"></div>
<div class="a hcell" style="left:47px;top:316px;width:212px;height:24px"></div>
<div class="a txt" style="left:48px;top:322px">Вернуть в Утверждено</div>
<div class="a" style="left:331px;top:316px;width:592px;height:24px;background:#faf9f2"></div>
<div class="a" style="left:263px;top:316px;width:67px;height:24px;border:1px solid #8eaad0;background:#faf9f2"></div>
<div class="a" style="left:285px;top:316px;width:1px;height:24px;background:#8eaad0"></div>
<div class="a" style="left:307px;top:316px;width:1px;height:24px;background:#8eaad0"></div>
<div class="a" style="left:262px;top:316px"><svg width="20" height="20" viewBox="0 0 20 20"><path d="M5.9 12 L10 15.9 L18 8.5" fill="none" stroke="#7f7c77" stroke-width="2.7" stroke-linecap="round" stroke-linejoin="round"/><path d="M5.9 12 L10 15.9 L18 8.5" fill="none" stroke="#a19e99" stroke-width="1.3" stroke-linecap="round" stroke-linejoin="round"/></svg></div><div class="a" style="left:282px;top:316px"><svg width="20" height="20" viewBox="0 0 20 20"><g fill="#aeb3ba" opacity="0.7"><rect x="6.90" y="5.00" width="2.6" height="1.4"/><rect x="6.90" y="17.60" width="2.6" height="1.4"/><rect x="6.90" y="5.00" width="1.4" height="2.6"/><rect x="19.50" y="5.00" width="1.4" height="2.6"/><rect x="10.70" y="5.00" width="2.6" height="1.4"/><rect x="10.70" y="17.60" width="2.6" height="1.4"/><rect x="6.90" y="8.80" width="1.4" height="2.6"/><rect x="19.50" y="8.80" width="1.4" height="2.6"/><rect x="14.50" y="5.00" width="2.6" height="1.4"/><rect x="14.50" y="17.60" width="2.6" height="1.4"/><rect x="6.90" y="12.60" width="1.4" height="2.6"/><rect x="19.50" y="12.60" width="1.4" height="2.6"/><rect x="18.30" y="5.00" width="2.6" height="1.4"/><rect x="18.30" y="17.60" width="2.6" height="1.4"/><rect x="6.90" y="16.40" width="1.4" height="2.6"/><rect x="19.50" y="16.40" width="1.4" height="2.6"/></g><g fill="#747474" opacity="1"><rect x="6.20" y="4.30" width="2.6" height="1.35"/><rect x="6.20" y="16.95" width="2.6" height="1.35"/><rect x="6.20" y="4.30" width="1.35" height="2.6"/><rect x="18.85" y="4.30" width="1.35" height="2.6"/><rect x="10.00" y="4.30" width="2.6" height="1.35"/><rect x="10.00" y="16.95" width="2.6" height="1.35"/><rect x="6.20" y="8.10" width="1.35" height="2.6"/><rect x="18.85" y="8.10" width="1.35" height="2.6"/><rect x="13.80" y="4.30" width="2.6" height="1.35"/><rect x="13.80" y="16.95" width="2.6" height="1.35"/><rect x="6.20" y="11.90" width="1.35" height="2.6"/><rect x="18.85" y="11.90" width="1.35" height="2.6"/><rect x="17.60" y="4.30" width="2.6" height="1.35"/><rect x="17.60" y="16.95" width="2.6" height="1.35"/><rect x="6.20" y="15.70" width="1.35" height="2.6"/><rect x="18.85" y="15.70" width="1.35" height="2.6"/></g></svg></div><div class="a" style="left:306px;top:316px"><svg width="20" height="20" viewBox="0 0 20 20"><path d="M7.7 7.9 L16.2 16.3 M16.2 7.9 L7.7 16.3" fill="none" stroke="#7d7b78" stroke-width="3.2" stroke-linecap="round"/><path d="M7.7 7.9 L16.2 16.3 M16.2 7.9 L7.7 16.3" fill="none" stroke="#a3a19d" stroke-width="1.6" stroke-linecap="round"/></svg></div>
<i class="cb" style="left:398px;top:321px"></i>
<i class="cb" style="left:546px;top:321px"></i>
<i class="cb" style="left:694px;top:321px"></i>
<i class="cb" style="left:842px;top:321px"></i>
<div class="a" style="left:29px;top:340px;width:231px;height:1px;background:#c5d6ee"></div>
<div class="a" style="left:331px;top:340px;width:593px;height:1px;background:#c5d8f1"></div>
<div class="a hcell" style="left:29px;top:341px;width:17px;height:24px"></div>
<div class="a hcell" style="left:47px;top:341px;width:212px;height:24px"></div>
<div class="a txt" style="left:48px;top:347px">Выделить к уничтожению</div>
<div class="a" style="left:331px;top:341px;width:592px;height:24px;background:#fff"></div>
<div class="a" style="left:263px;top:341px;width:67px;height:24px;border:1px solid #8eaad0;background:#fff"></div>
<div class="a" style="left:285px;top:341px;width:1px;height:24px;background:#8eaad0"></div>
<div class="a" style="left:307px;top:341px;width:1px;height:24px;background:#8eaad0"></div>
<div class="a" style="left:262px;top:341px"><svg width="20" height="20" viewBox="0 0 20 20"><path d="M5.9 12 L10 15.9 L18 8.5" fill="none" stroke="#7f7c77" stroke-width="2.7" stroke-linecap="round" stroke-linejoin="round"/><path d="M5.9 12 L10 15.9 L18 8.5" fill="none" stroke="#a19e99" stroke-width="1.3" stroke-linecap="round" stroke-linejoin="round"/></svg></div><div class="a" style="left:282px;top:341px"><svg width="20" height="20" viewBox="0 0 20 20"><g fill="#aeb3ba" opacity="0.7"><rect x="6.90" y="5.00" width="2.6" height="1.4"/><rect x="6.90" y="17.60" width="2.6" height="1.4"/><rect x="6.90" y="5.00" width="1.4" height="2.6"/><rect x="19.50" y="5.00" width="1.4" height="2.6"/><rect x="10.70" y="5.00" width="2.6" height="1.4"/><rect x="10.70" y="17.60" width="2.6" height="1.4"/><rect x="6.90" y="8.80" width="1.4" height="2.6"/><rect x="19.50" y="8.80" width="1.4" height="2.6"/><rect x="14.50" y="5.00" width="2.6" height="1.4"/><rect x="14.50" y="17.60" width="2.6" height="1.4"/><rect x="6.90" y="12.60" width="1.4" height="2.6"/><rect x="19.50" y="12.60" width="1.4" height="2.6"/><rect x="18.30" y="5.00" width="2.6" height="1.4"/><rect x="18.30" y="17.60" width="2.6" height="1.4"/><rect x="6.90" y="16.40" width="1.4" height="2.6"/><rect x="19.50" y="16.40" width="1.4" height="2.6"/></g><g fill="#747474" opacity="1"><rect x="6.20" y="4.30" width="2.6" height="1.35"/><rect x="6.20" y="16.95" width="2.6" height="1.35"/><rect x="6.20" y="4.30" width="1.35" height="2.6"/><rect x="18.85" y="4.30" width="1.35" height="2.6"/><rect x="10.00" y="4.30" width="2.6" height="1.35"/><rect x="10.00" y="16.95" width="2.6" height="1.35"/><rect x="6.20" y="8.10" width="1.35" height="2.6"/><rect x="18.85" y="8.10" width="1.35" height="2.6"/><rect x="13.80" y="4.30" width="2.6" height="1.35"/><rect x="13.80" y="16.95" width="2.6" height="1.35"/><rect x="6.20" y="11.90" width="1.35" height="2.6"/><rect x="18.85" y="11.90" width="1.35" height="2.6"/><rect x="17.60" y="4.30" width="2.6" height="1.35"/><rect x="17.60" y="16.95" width="2.6" height="1.35"/><rect x="6.20" y="15.70" width="1.35" height="2.6"/><rect x="18.85" y="15.70" width="1.35" height="2.6"/></g></svg></div><div class="a" style="left:306px;top:341px"><svg width="20" height="20" viewBox="0 0 20 20"><path d="M7.7 7.9 L16.2 16.3 M16.2 7.9 L7.7 16.3" fill="none" stroke="#7d7b78" stroke-width="3.2" stroke-linecap="round"/><path d="M7.7 7.9 L16.2 16.3 M16.2 7.9 L7.7 16.3" fill="none" stroke="#a3a19d" stroke-width="1.6" stroke-linecap="round"/></svg></div>
<i class="cb" style="left:398px;top:346px"></i>
<i class="cb" style="left:546px;top:346px"></i>
<i class="cb" style="left:694px;top:346px"></i>
<i class="cb" style="left:842px;top:346px"></i>
<div class="a" style="left:29px;top:365px;width:231px;height:1px;background:#c5d6ee"></div>
<div class="a" style="left:331px;top:365px;width:593px;height:1px;background:#c5d8f1"></div>
<div class="a hcell" style="left:29px;top:366px;width:17px;height:24px"></div>
<div class="a hcell" style="left:47px;top:366px;width:212px;height:24px"></div>
<div class="a txt" style="left:48px;top:372px">Добавление файлов</div>
<div class="a" style="left:331px;top:366px;width:592px;height:24px;background:#faf9f2"></div>
<div class="a" style="left:263px;top:366px;width:67px;height:24px;border:1px solid #8eaad0;background:#faf9f2"></div>
<div class="a" style="left:285px;top:366px;width:1px;height:24px;background:#8eaad0"></div>
<div class="a" style="left:307px;top:366px;width:1px;height:24px;background:#8eaad0"></div>
<div class="a" style="left:262px;top:366px"><svg width="20" height="20" viewBox="0 0 20 20"><path d="M5.9 12 L10 15.9 L18 8.5" fill="none" stroke="#7f7c77" stroke-width="2.7" stroke-linecap="round" stroke-linejoin="round"/><path d="M5.9 12 L10 15.9 L18 8.5" fill="none" stroke="#a19e99" stroke-width="1.3" stroke-linecap="round" stroke-linejoin="round"/></svg></div><div class="a" style="left:282px;top:366px"><svg width="20" height="20" viewBox="0 0 20 20"><g fill="#aeb3ba" opacity="0.7"><rect x="6.90" y="5.00" width="2.6" height="1.4"/><rect x="6.90" y="17.60" width="2.6" height="1.4"/><rect x="6.90" y="5.00" width="1.4" height="2.6"/><rect x="19.50" y="5.00" width="1.4" height="2.6"/><rect x="10.70" y="5.00" width="2.6" height="1.4"/><rect x="10.70" y="17.60" width="2.6" height="1.4"/><rect x="6.90" y="8.80" width="1.4" height="2.6"/><rect x="19.50" y="8.80" width="1.4" height="2.6"/><rect x="14.50" y="5.00" width="2.6" height="1.4"/><rect x="14.50" y="17.60" width="2.6" height="1.4"/><rect x="6.90" y="12.60" width="1.4" height="2.6"/><rect x="19.50" y="12.60" width="1.4" height="2.6"/><rect x="18.30" y="5.00" width="2.6" height="1.4"/><rect x="18.30" y="17.60" width="2.6" height="1.4"/><rect x="6.90" y="16.40" width="1.4" height="2.6"/><rect x="19.50" y="16.40" width="1.4" height="2.6"/></g><g fill="#747474" opacity="1"><rect x="6.20" y="4.30" width="2.6" height="1.35"/><rect x="6.20" y="16.95" width="2.6" height="1.35"/><rect x="6.20" y="4.30" width="1.35" height="2.6"/><rect x="18.85" y="4.30" width="1.35" height="2.6"/><rect x="10.00" y="4.30" width="2.6" height="1.35"/><rect x="10.00" y="16.95" width="2.6" height="1.35"/><rect x="6.20" y="8.10" width="1.35" height="2.6"/><rect x="18.85" y="8.10" width="1.35" height="2.6"/><rect x="13.80" y="4.30" width="2.6" height="1.35"/><rect x="13.80" y="16.95" width="2.6" height="1.35"/><rect x="6.20" y="11.90" width="1.35" height="2.6"/><rect x="18.85" y="11.90" width="1.35" height="2.6"/><rect x="17.60" y="4.30" width="2.6" height="1.35"/><rect x="17.60" y="16.95" width="2.6" height="1.35"/><rect x="6.20" y="15.70" width="1.35" height="2.6"/><rect x="18.85" y="15.70" width="1.35" height="2.6"/></g></svg></div><div class="a" style="left:306px;top:366px"><svg width="20" height="20" viewBox="0 0 20 20"><path d="M7.7 7.9 L16.2 16.3 M16.2 7.9 L7.7 16.3" fill="none" stroke="#7d7b78" stroke-width="3.2" stroke-linecap="round"/><path d="M7.7 7.9 L16.2 16.3 M16.2 7.9 L7.7 16.3" fill="none" stroke="#a3a19d" stroke-width="1.6" stroke-linecap="round"/></svg></div>
<i class="cb" style="left:398px;top:371px"></i><div class="a" style="left:398px;top:371px"><svg width="14" height="14" viewBox="0 0 14 14"><path d="M3.6 5.8 L6 9.2 L10.2 3.9" fill="none" stroke="#22a322" stroke-width="2" stroke-linecap="round" stroke-linejoin="round"/></svg></div>
<i class="cb" style="left:546px;top:371px"></i><div class="a" style="left:546px;top:371px"><svg width="14" height="14" viewBox="0 0 14 14"><path d="M3.6 5.8 L6 9.2 L10.2 3.9" fill="none" stroke="#22a322" stroke-width="2" stroke-linecap="round" stroke-linejoin="round"/></svg></div>
<i class="cb" style="left:694px;top:371px"></i><div class="a" style="left:694px;top:371px"><svg width="14" height="14" viewBox="0 0 14 14"><path d="M3.6 5.8 L6 9.2 L10.2 3.9" fill="none" stroke="#22a322" stroke-width="2" stroke-linecap="round" stroke-linejoin="round"/></svg></div>
<i class="cb" style="left:842px;top:371px"></i><div class="a" style="left:842px;top:371px"><svg width="14" height="14" viewBox="0 0 14 14"><path d="M3.6 5.8 L6 9.2 L10.2 3.9" fill="none" stroke="#22a322" stroke-width="2" stroke-linecap="round" stroke-linejoin="round"/></svg></div>
<div class="a" style="left:29px;top:390px;width:231px;height:1px;background:#c5d6ee"></div>
<div class="a" style="left:331px;top:390px;width:593px;height:1px;background:#c5d8f1"></div>
<div class="a hcell" style="left:29px;top:391px;width:17px;height:24px"></div>
<div class="a hcell" style="left:47px;top:391px;width:212px;height:24px"></div>
<div class="a txt" style="left:48px;top:397px">Закрыть</div>
<div class="a" style="left:331px;top:391px;width:592px;height:24px;background:#fff"></div>
<div class="a" style="left:263px;top:391px;width:67px;height:24px;border:1px solid #8eaad0;background:#fff"></div>
<div class="a" style="left:285px;top:391px;width:1px;height:24px;background:#8eaad0"></div>
<div class="a" style="left:307px;top:391px;width:1px;height:24px;background:#8eaad0"></div>
<div class="a" style="left:262px;top:391px"><svg width="20" height="20" viewBox="0 0 20 20"><path d="M5.9 12 L10 15.9 L18 8.5" fill="none" stroke="#7f7c77" stroke-width="2.7" stroke-linecap="round" stroke-linejoin="round"/><path d="M5.9 12 L10 15.9 L18 8.5" fill="none" stroke="#a19e99" stroke-width="1.3" stroke-linecap="round" stroke-linejoin="round"/></svg></div><div class="a" style="left:282px;top:391px"><svg width="20" height="20" viewBox="0 0 20 20"><g fill="#aeb3ba" opacity="0.7"><rect x="6.90" y="5.00" width="2.6" height="1.4"/><rect x="6.90" y="17.60" width="2.6" height="1.4"/><rect x="6.90" y="5.00" width="1.4" height="2.6"/><rect x="19.50" y="5.00" width="1.4" height="2.6"/><rect x="10.70" y="5.00" width="2.6" height="1.4"/><rect x="10.70" y="17.60" width="2.6" height="1.4"/><rect x="6.90" y="8.80" width="1.4" height="2.6"/><rect x="19.50" y="8.80" width="1.4" height="2.6"/><rect x="14.50" y="5.00" width="2.6" height="1.4"/><rect x="14.50" y="17.60" width="2.6" height="1.4"/><rect x="6.90" y="12.60" width="1.4" height="2.6"/><rect x="19.50" y="12.60" width="1.4" height="2.6"/><rect x="18.30" y="5.00" width="2.6" height="1.4"/><rect x="18.30" y="17.60" width="2.6" height="1.4"/><rect x="6.90" y="16.40" width="1.4" height="2.6"/><rect x="19.50" y="16.40" width="1.4" height="2.6"/></g><g fill="#747474" opacity="1"><rect x="6.20" y="4.30" width="2.6" height="1.35"/><rect x="6.20" y="16.95" width="2.6" height="1.35"/><rect x="6.20" y="4.30" width="1.35" height="2.6"/><rect x="18.85" y="4.30" width="1.35" height="2.6"/><rect x="10.00" y="4.30" width="2.6" height="1.35"/><rect x="10.00" y="16.95" width="2.6" height="1.35"/><rect x="6.20" y="8.10" width="1.35" height="2.6"/><rect x="18.85" y="8.10" width="1.35" height="2.6"/><rect x="13.80" y="4.30" width="2.6" height="1.35"/><rect x="13.80" y="16.95" width="2.6" height="1.35"/><rect x="6.20" y="11.90" width="1.35" height="2.6"/><rect x="18.85" y="11.90" width="1.35" height="2.6"/><rect x="17.60" y="4.30" width="2.6" height="1.35"/><rect x="17.60" y="16.95" width="2.6" height="1.35"/><rect x="6.20" y="15.70" width="1.35" height="2.6"/><rect x="18.85" y="15.70" width="1.35" height="2.6"/></g></svg></div><div class="a" style="left:306px;top:391px"><svg width="20" height="20" viewBox="0 0 20 20"><path d="M7.7 7.9 L16.2 16.3 M16.2 7.9 L7.7 16.3" fill="none" stroke="#7d7b78" stroke-width="3.2" stroke-linecap="round"/><path d="M7.7 7.9 L16.2 16.3 M16.2 7.9 L7.7 16.3" fill="none" stroke="#a3a19d" stroke-width="1.6" stroke-linecap="round"/></svg></div>
<i class="cb g" style="left:398px;top:396px"></i>
<i class="cb" style="left:546px;top:396px"></i><div class="a" style="left:546px;top:396px"><svg width="14" height="14" viewBox="0 0 14 14"><path d="M3.6 5.8 L6 9.2 L10.2 3.9" fill="none" stroke="#22a322" stroke-width="2" stroke-linecap="round" stroke-linejoin="round"/></svg></div>
<i class="cb g" style="left:694px;top:396px"></i>
<i class="cb g" style="left:842px;top:396px"></i>
<div class="a" style="left:29px;top:415px;width:231px;height:1px;background:#c5d6ee"></div>
<div class="a" style="left:331px;top:415px;width:593px;height:1px;background:#c5d8f1"></div>
<div class="a hcell" style="left:29px;top:416px;width:17px;height:24px"></div>
<div class="a hcell" style="left:47px;top:416px;width:212px;height:24px"></div>
<div class="a txt" style="left:48px;top:422px">Изменение</div>
<div class="a" style="left:331px;top:416px;width:592px;height:24px;background:#faf9f2"></div>
<div class="a" style="left:263px;top:416px;width:67px;height:24px;border:1px solid #8eaad0;background:#faf9f2"></div>
<div class="a" style="left:285px;top:416px;width:1px;height:24px;background:#8eaad0"></div>
<div class="a" style="left:307px;top:416px;width:1px;height:24px;background:#8eaad0"></div>
<div class="a" style="left:262px;top:416px"><svg width="20" height="20" viewBox="0 0 20 20"><path d="M5.9 12 L10 15.9 L18 8.5" fill="none" stroke="#7f7c77" stroke-width="2.7" stroke-linecap="round" stroke-linejoin="round"/><path d="M5.9 12 L10 15.9 L18 8.5" fill="none" stroke="#a19e99" stroke-width="1.3" stroke-linecap="round" stroke-linejoin="round"/></svg></div><div class="a" style="left:282px;top:416px"><svg width="20" height="20" viewBox="0 0 20 20"><g fill="#aeb3ba" opacity="0.7"><rect x="6.90" y="5.00" width="2.6" height="1.4"/><rect x="6.90" y="17.60" width="2.6" height="1.4"/><rect x="6.90" y="5.00" width="1.4" height="2.6"/><rect x="19.50" y="5.00" width="1.4" height="2.6"/><rect x="10.70" y="5.00" width="2.6" height="1.4"/><rect x="10.70" y="17.60" width="2.6" height="1.4"/><rect x="6.90" y="8.80" width="1.4" height="2.6"/><rect x="19.50" y="8.80" width="1.4" height="2.6"/><rect x="14.50" y="5.00" width="2.6" height="1.4"/><rect x="14.50" y="17.60" width="2.6" height="1.4"/><rect x="6.90" y="12.60" width="1.4" height="2.6"/><rect x="19.50" y="12.60" width="1.4" height="2.6"/><rect x="18.30" y="5.00" width="2.6" height="1.4"/><rect x="18.30" y="17.60" width="2.6" height="1.4"/><rect x="6.90" y="16.40" width="1.4" height="2.6"/><rect x="19.50" y="16.40" width="1.4" height="2.6"/></g><g fill="#747474" opacity="1"><rect x="6.20" y="4.30" width="2.6" height="1.35"/><rect x="6.20" y="16.95" width="2.6" height="1.35"/><rect x="6.20" y="4.30" width="1.35" height="2.6"/><rect x="18.85" y="4.30" width="1.35" height="2.6"/><rect x="10.00" y="4.30" width="2.6" height="1.35"/><rect x="10.00" y="16.95" width="2.6" height="1.35"/><rect x="6.20" y="8.10" width="1.35" height="2.6"/><rect x="18.85" y="8.10" width="1.35" height="2.6"/><rect x="13.80" y="4.30" width="2.6" height="1.35"/><rect x="13.80" y="16.95" width="2.6" height="1.35"/><rect x="6.20" y="11.90" width="1.35" height="2.6"/><rect x="18.85" y="11.90" width="1.35" height="2.6"/><rect x="17.60" y="4.30" width="2.6" height="1.35"/><rect x="17.60" y="16.95" width="2.6" height="1.35"/><rect x="6.20" y="15.70" width="1.35" height="2.6"/><rect x="18.85" y="15.70" width="1.35" height="2.6"/></g></svg></div><div class="a" style="left:306px;top:416px"><svg width="20" height="20" viewBox="0 0 20 20"><path d="M7.7 7.9 L16.2 16.3 M16.2 7.9 L7.7 16.3" fill="none" stroke="#7d7b78" stroke-width="3.2" stroke-linecap="round"/><path d="M7.7 7.9 L16.2 16.3 M16.2 7.9 L7.7 16.3" fill="none" stroke="#a3a19d" stroke-width="1.6" stroke-linecap="round"/></svg></div>
<i class="cb" style="left:398px;top:421px"></i><div class="a" style="left:398px;top:421px"><svg width="14" height="14" viewBox="0 0 14 14"><path d="M3.6 5.8 L6 9.2 L10.2 3.9" fill="none" stroke="#22a322" stroke-width="2" stroke-linecap="round" stroke-linejoin="round"/></svg></div>
<i class="cb" style="left:546px;top:421px"></i><div class="a" style="left:546px;top:421px"><svg width="14" height="14" viewBox="0 0 14 14"><path d="M3.6 5.8 L6 9.2 L10.2 3.9" fill="none" stroke="#22a322" stroke-width="2" stroke-linecap="round" stroke-linejoin="round"/></svg></div>
<i class="cb" style="left:694px;top:421px"></i><div class="a" style="left:694px;top:421px"><svg width="14" height="14" viewBox="0 0 14 14"><path d="M3.6 5.8 L6 9.2 L10.2 3.9" fill="none" stroke="#22a322" stroke-width="2" stroke-linecap="round" stroke-linejoin="round"/></svg></div>
<i class="cb" style="left:842px;top:421px"></i><div class="a" style="left:842px;top:421px"><svg width="14" height="14" viewBox="0 0 14 14"><path d="M3.6 5.8 L6 9.2 L10.2 3.9" fill="none" stroke="#22a322" stroke-width="2" stroke-linecap="round" stroke-linejoin="round"/></svg></div>
<div class="a" style="left:29px;top:440px;width:231px;height:1px;background:#c5d6ee"></div>
<div class="a" style="left:331px;top:440px;width:593px;height:1px;background:#c5d8f1"></div>
<div class="a hcell" style="left:29px;top:441px;width:17px;height:24px"></div>
<div class="a hcell" style="left:47px;top:441px;width:212px;height:24px"></div>
<div class="a txt" style="left:48px;top:447px">Изменение штрих-кода</div>
<div class="a" style="left:331px;top:441px;width:592px;height:24px;background:#fff"></div>
<div class="a" style="left:263px;top:441px;width:67px;height:24px;border:1px solid #8eaad0;background:#fff"></div>
<div class="a" style="left:285px;top:441px;width:1px;height:24px;background:#8eaad0"></div>
<div class="a" style="left:307px;top:441px;width:1px;height:24px;background:#8eaad0"></div>
<div class="a" style="left:262px;top:441px"><svg width="20" height="20" viewBox="0 0 20 20"><path d="M5.9 12 L10 15.9 L18 8.5" fill="none" stroke="#7f7c77" stroke-width="2.7" stroke-linecap="round" stroke-linejoin="round"/><path d="M5.9 12 L10 15.9 L18 8.5" fill="none" stroke="#a19e99" stroke-width="1.3" stroke-linecap="round" stroke-linejoin="round"/></svg></div><div class="a" style="left:282px;top:441px"><svg width="20" height="20" viewBox="0 0 20 20"><g fill="#aeb3ba" opacity="0.7"><rect x="6.90" y="5.00" width="2.6" height="1.4"/><rect x="6.90" y="17.60" width="2.6" height="1.4"/><rect x="6.90" y="5.00" width="1.4" height="2.6"/><rect x="19.50" y="5.00" width="1.4" height="2.6"/><rect x="10.70" y="5.00" width="2.6" height="1.4"/><rect x="10.70" y="17.60" width="2.6" height="1.4"/><rect x="6.90" y="8.80" width="1.4" height="2.6"/><rect x="19.50" y="8.80" width="1.4" height="2.6"/><rect x="14.50" y="5.00" width="2.6" height="1.4"/><rect x="14.50" y="17.60" width="2.6" height="1.4"/><rect x="6.90" y="12.60" width="1.4" height="2.6"/><rect x="19.50" y="12.60" width="1.4" height="2.6"/><rect x="18.30" y="5.00" width="2.6" height="1.4"/><rect x="18.30" y="17.60" width="2.6" height="1.4"/><rect x="6.90" y="16.40" width="1.4" height="2.6"/><rect x="19.50" y="16.40" width="1.4" height="2.6"/></g><g fill="#747474" opacity="1"><rect x="6.20" y="4.30" width="2.6" height="1.35"/><rect x="6.20" y="16.95" width="2.6" height="1.35"/><rect x="6.20" y="4.30" width="1.35" height="2.6"/><rect x="18.85" y="4.30" width="1.35" height="2.6"/><rect x="10.00" y="4.30" width="2.6" height="1.35"/><rect x="10.00" y="16.95" width="2.6" height="1.35"/><rect x="6.20" y="8.10" width="1.35" height="2.6"/><rect x="18.85" y="8.10" width="1.35" height="2.6"/><rect x="13.80" y="4.30" width="2.6" height="1.35"/><rect x="13.80" y="16.95" width="2.6" height="1.35"/><rect x="6.20" y="11.90" width="1.35" height="2.6"/><rect x="18.85" y="11.90" width="1.35" height="2.6"/><rect x="17.60" y="4.30" width="2.6" height="1.35"/><rect x="17.60" y="16.95" width="2.6" height="1.35"/><rect x="6.20" y="15.70" width="1.35" height="2.6"/><rect x="18.85" y="15.70" width="1.35" height="2.6"/></g></svg></div><div class="a" style="left:306px;top:441px"><svg width="20" height="20" viewBox="0 0 20 20"><path d="M7.7 7.9 L16.2 16.3 M16.2 7.9 L7.7 16.3" fill="none" stroke="#7d7b78" stroke-width="3.2" stroke-linecap="round"/><path d="M7.7 7.9 L16.2 16.3 M16.2 7.9 L7.7 16.3" fill="none" stroke="#a3a19d" stroke-width="1.6" stroke-linecap="round"/></svg></div>
<i class="cb" style="left:398px;top:446px"></i>
<i class="cb" style="left:546px;top:446px"></i>
<i class="cb" style="left:694px;top:446px"></i>
<i class="cb" style="left:842px;top:446px"></i>
<div class="a" style="left:29px;top:465px;width:231px;height:1px;background:#c5d6ee"></div>
<div class="a" style="left:331px;top:465px;width:593px;height:1px;background:#c5d8f1"></div>
<div class="a hcell" style="left:29px;top:466px;width:17px;height:24px"></div>
<div class="a hcell" style="left:47px;top:466px;width:212px;height:24px"></div>
<div class="a txt" style="left:48px;top:472px">Назначение категории</div>
<div class="a" style="left:331px;top:466px;width:592px;height:24px;background:#faf9f2"></div>
<div class="a" style="left:263px;top:466px;width:67px;height:24px;border:1px solid #8eaad0;background:#faf9f2"></div>
<div class="a" style="left:285px;top:466px;width:1px;height:24px;background:#8eaad0"></div>
<div class="a" style="left:307px;top:466px;width:1px;height:24px;background:#8eaad0"></div>
<div class="a" style="left:262px;top:466px"><svg width="20" height="20" viewBox="0 0 20 20"><path d="M5.9 12 L10 15.9 L18 8.5" fill="none" stroke="#7f7c77" stroke-width="2.7" stroke-linecap="round" stroke-linejoin="round"/><path d="M5.9 12 L10 15.9 L18 8.5" fill="none" stroke="#a19e99" stroke-width="1.3" stroke-linecap="round" stroke-linejoin="round"/></svg></div><div class="a" style="left:282px;top:466px"><svg width="20" height="20" viewBox="0 0 20 20"><g fill="#aeb3ba" opacity="0.7"><rect x="6.90" y="5.00" width="2.6" height="1.4"/><rect x="6.90" y="17.60" width="2.6" height="1.4"/><rect x="6.90" y="5.00" width="1.4" height="2.6"/><rect x="19.50" y="5.00" width="1.4" height="2.6"/><rect x="10.70" y="5.00" width="2.6" height="1.4"/><rect x="10.70" y="17.60" width="2.6" height="1.4"/><rect x="6.90" y="8.80" width="1.4" height="2.6"/><rect x="19.50" y="8.80" width="1.4" height="2.6"/><rect x="14.50" y="5.00" width="2.6" height="1.4"/><rect x="14.50" y="17.60" width="2.6" height="1.4"/><rect x="6.90" y="12.60" width="1.4" height="2.6"/><rect x="19.50" y="12.60" width="1.4" height="2.6"/><rect x="18.30" y="5.00" width="2.6" height="1.4"/><rect x="18.30" y="17.60" width="2.6" height="1.4"/><rect x="6.90" y="16.40" width="1.4" height="2.6"/><rect x="19.50" y="16.40" width="1.4" height="2.6"/></g><g fill="#747474" opacity="1"><rect x="6.20" y="4.30" width="2.6" height="1.35"/><rect x="6.20" y="16.95" width="2.6" height="1.35"/><rect x="6.20" y="4.30" width="1.35" height="2.6"/><rect x="18.85" y="4.30" width="1.35" height="2.6"/><rect x="10.00" y="4.30" width="2.6" height="1.35"/><rect x="10.00" y="16.95" width="2.6" height="1.35"/><rect x="6.20" y="8.10" width="1.35" height="2.6"/><rect x="18.85" y="8.10" width="1.35" height="2.6"/><rect x="13.80" y="4.30" width="2.6" height="1.35"/><rect x="13.80" y="16.95" width="2.6" height="1.35"/><rect x="6.20" y="11.90" width="1.35" height="2.6"/><rect x="18.85" y="11.90" width="1.35" height="2.6"/><rect x="17.60" y="4.30" width="2.6" height="1.35"/><rect x="17.60" y="16.95" width="2.6" height="1.35"/><rect x="6.20" y="15.70" width="1.35" height="2.6"/><rect x="18.85" y="15.70" width="1.35" height="2.6"/></g></svg></div><div class="a" style="left:306px;top:466px"><svg width="20" height="20" viewBox="0 0 20 20"><path d="M7.7 7.9 L16.2 16.3 M16.2 7.9 L7.7 16.3" fill="none" stroke="#7d7b78" stroke-width="3.2" stroke-linecap="round"/><path d="M7.7 7.9 L16.2 16.3 M16.2 7.9 L7.7 16.3" fill="none" stroke="#a3a19d" stroke-width="1.6" stroke-linecap="round"/></svg></div>
<i class="cb" style="left:398px;top:471px"></i>
<i class="cb" style="left:546px;top:471px"></i>
<i class="cb" style="left:694px;top:471px"></i>
<i class="cb" style="left:842px;top:471px"></i>
<div class="a" style="left:29px;top:490px;width:231px;height:1px;background:#c5d6ee"></div>
<div class="a" style="left:331px;top:490px;width:593px;height:1px;background:#c5d8f1"></div>
<div class="a hcell" style="left:29px;top:491px;width:17px;height:24px"></div>
<div class="a hcell" style="left:47px;top:491px;width:212px;height:24px"></div>
<div class="a txt" style="left:48px;top:497px">Опись дела</div>
<div class="a" style="left:331px;top:491px;width:592px;height:24px;background:#fff"></div>
<div class="a" style="left:263px;top:491px;width:67px;height:24px;border:1px solid #8eaad0;background:#fff"></div>
<div class="a" style="left:285px;top:491px;width:1px;height:24px;background:#8eaad0"></div>
<div class="a" style="left:307px;top:491px;width:1px;height:24px;background:#8eaad0"></div>
<div class="a" style="left:262px;top:491px"><svg width="20" height="20" viewBox="0 0 20 20"><path d="M5.9 12 L10 15.9 L18 8.5" fill="none" stroke="#7f7c77" stroke-width="2.7" stroke-linecap="round" stroke-linejoin="round"/><path d="M5.9 12 L10 15.9 L18 8.5" fill="none" stroke="#a19e99" stroke-width="1.3" stroke-linecap="round" stroke-linejoin="round"/></svg></div><div class="a" style="left:282px;top:491px"><svg width="20" height="20" viewBox="0 0 20 20"><g fill="#aeb3ba" opacity="0.7"><rect x="6.90" y="5.00" width="2.6" height="1.4"/><rect x="6.90" y="17.60" width="2.6" height="1.4"/><rect x="6.90" y="5.00" width="1.4" height="2.6"/><rect x="19.50" y="5.00" width="1.4" height="2.6"/><rect x="10.70" y="5.00" width="2.6" height="1.4"/><rect x="10.70" y="17.60" width="2.6" height="1.4"/><rect x="6.90" y="8.80" width="1.4" height="2.6"/><rect x="19.50" y="8.80" width="1.4" height="2.6"/><rect x="14.50" y="5.00" width="2.6" height="1.4"/><rect x="14.50" y="17.60" width="2.6" height="1.4"/><rect x="6.90" y="12.60" width="1.4" height="2.6"/><rect x="19.50" y="12.60" width="1.4" height="2.6"/><rect x="18.30" y="5.00" width="2.6" height="1.4"/><rect x="18.30" y="17.60" width="2.6" height="1.4"/><rect x="6.90" y="16.40" width="1.4" height="2.6"/><rect x="19.50" y="16.40" width="1.4" height="2.6"/></g><g fill="#747474" opacity="1"><rect x="6.20" y="4.30" width="2.6" height="1.35"/><rect x="6.20" y="16.95" width="2.6" height="1.35"/><rect x="6.20" y="4.30" width="1.35" height="2.6"/><rect x="18.85" y="4.30" width="1.35" height="2.6"/><rect x="10.00" y="4.30" width="2.6" height="1.35"/><rect x="10.00" y="16.95" width="2.6" height="1.35"/><rect x="6.20" y="8.10" width="1.35" height="2.6"/><rect x="18.85" y="8.10" width="1.35" height="2.6"/><rect x="13.80" y="4.30" width="2.6" height="1.35"/><rect x="13.80" y="16.95" width="2.6" height="1.35"/><rect x="6.20" y="11.90" width="1.35" height="2.6"/><rect x="18.85" y="11.90" width="1.35" height="2.6"/><rect x="17.60" y="4.30" width="2.6" height="1.35"/><rect x="17.60" y="16.95" width="2.6" height="1.35"/><rect x="6.20" y="15.70" width="1.35" height="2.6"/><rect x="18.85" y="15.70" width="1.35" height="2.6"/></g></svg></div><div class="a" style="left:306px;top:491px"><svg width="20" height="20" viewBox="0 0 20 20"><path d="M7.7 7.9 L16.2 16.3 M16.2 7.9 L7.7 16.3" fill="none" stroke="#7d7b78" stroke-width="3.2" stroke-linecap="round"/><path d="M7.7 7.9 L16.2 16.3 M16.2 7.9 L7.7 16.3" fill="none" stroke="#a3a19d" stroke-width="1.6" stroke-linecap="round"/></svg></div>
<i class="cb" style="left:398px;top:496px"></i><div class="a" style="left:398px;top:496px"><svg width="14" height="14" viewBox="0 0 14 14"><path d="M3.6 5.8 L6 9.2 L10.2 3.9" fill="none" stroke="#22a322" stroke-width="2" stroke-linecap="round" stroke-linejoin="round"/></svg></div>
<i class="cb" style="left:546px;top:496px"></i><div class="a" style="left:546px;top:496px"><svg width="14" height="14" viewBox="0 0 14 14"><path d="M3.6 5.8 L6 9.2 L10.2 3.9" fill="none" stroke="#22a322" stroke-width="2" stroke-linecap="round" stroke-linejoin="round"/></svg></div>
<i class="cb" style="left:694px;top:496px"></i><div class="a" style="left:694px;top:496px"><svg width="14" height="14" viewBox="0 0 14 14"><path d="M3.6 5.8 L6 9.2 L10.2 3.9" fill="none" stroke="#22a322" stroke-width="2" stroke-linecap="round" stroke-linejoin="round"/></svg></div>
<i class="cb" style="left:842px;top:496px"></i>
<div class="a" style="left:29px;top:515px;width:231px;height:1px;background:#c5d6ee"></div>
<div class="a" style="left:331px;top:515px;width:593px;height:1px;background:#c5d8f1"></div>
<div class="a hcell" style="left:29px;top:516px;width:17px;height:24px"></div>
<div class="a hcell" style="left:47px;top:516px;width:212px;height:24px"></div>
<div class="a txt" style="left:48px;top:522px">Переименование файлов</div>
<div class="a" style="left:331px;top:516px;width:592px;height:24px;background:#faf9f2"></div>
<div class="a" style="left:263px;top:516px;width:67px;height:24px;border:1px solid #8eaad0;background:#faf9f2"></div>
<div class="a" style="left:285px;top:516px;width:1px;height:24px;background:#8eaad0"></div>
<div class="a" style="left:307px;top:516px;width:1px;height:24px;background:#8eaad0"></div>
<div class="a" style="left:262px;top:516px"><svg width="20" height="20" viewBox="0 0 20 20"><path d="M5.9 12 L10 15.9 L18 8.5" fill="none" stroke="#7f7c77" stroke-width="2.7" stroke-linecap="round" stroke-linejoin="round"/><path d="M5.9 12 L10 15.9 L18 8.5" fill="none" stroke="#a19e99" stroke-width="1.3" stroke-linecap="round" stroke-linejoin="round"/></svg></div><div class="a" style="left:282px;top:516px"><svg width="20" height="20" viewBox="0 0 20 20"><g fill="#aeb3ba" opacity="0.7"><rect x="6.90" y="5.00" width="2.6" height="1.4"/><rect x="6.90" y="17.60" width="2.6" height="1.4"/><rect x="6.90" y="5.00" width="1.4" height="2.6"/><rect x="19.50" y="5.00" width="1.4" height="2.6"/><rect x="10.70" y="5.00" width="2.6" height="1.4"/><rect x="10.70" y="17.60" width="2.6" height="1.4"/><rect x="6.90" y="8.80" width="1.4" height="2.6"/><rect x="19.50" y="8.80" width="1.4" height="2.6"/><rect x="14.50" y="5.00" width="2.6" height="1.4"/><rect x="14.50" y="17.60" width="2.6" height="1.4"/><rect x="6.90" y="12.60" width="1.4" height="2.6"/><rect x="19.50" y="12.60" width="1.4" height="2.6"/><rect x="18.30" y="5.00" width="2.6" height="1.4"/><rect x="18.30" y="17.60" width="2.6" height="1.4"/><rect x="6.90" y="16.40" width="1.4" height="2.6"/><rect x="19.50" y="16.40" width="1.4" height="2.6"/></g><g fill="#747474" opacity="1"><rect x="6.20" y="4.30" width="2.6" height="1.35"/><rect x="6.20" y="16.95" width="2.6" height="1.35"/><rect x="6.20" y="4.30" width="1.35" height="2.6"/><rect x="18.85" y="4.30" width="1.35" height="2.6"/><rect x="10.00" y="4.30" width="2.6" height="1.35"/><rect x="10.00" y="16.95" width="2.6" height="1.35"/><rect x="6.20" y="8.10" width="1.35" height="2.6"/><rect x="18.85" y="8.10" width="1.35" height="2.6"/><rect x="13.80" y="4.30" width="2.6" height="1.35"/><rect x="13.80" y="16.95" width="2.6" height="1.35"/><rect x="6.20" y="11.90" width="1.35" height="2.6"/><rect x="18.85" y="11.90" width="1.35" height="2.6"/><rect x="17.60" y="4.30" width="2.6" height="1.35"/><rect x="17.60" y="16.95" width="2.6" height="1.35"/><rect x="6.20" y="15.70" width="1.35" height="2.6"/><rect x="18.85" y="15.70" width="1.35" height="2.6"/></g></svg></div><div class="a" style="left:306px;top:516px"><svg width="20" height="20" viewBox="0 0 20 20"><path d="M7.7 7.9 L16.2 16.3 M16.2 7.9 L7.7 16.3" fill="none" stroke="#7d7b78" stroke-width="3.2" stroke-linecap="round"/><path d="M7.7 7.9 L16.2 16.3 M16.2 7.9 L7.7 16.3" fill="none" stroke="#a3a19d" stroke-width="1.6" stroke-linecap="round"/></svg></div>
<i class="cb" style="left:398px;top:521px"></i><div class="a" style="left:398px;top:521px"><svg width="14" height="14" viewBox="0 0 14 14"><path d="M3.6 5.8 L6 9.2 L10.2 3.9" fill="none" stroke="#22a322" stroke-width="2" stroke-linecap="round" stroke-linejoin="round"/></svg></div>
<i class="cb" style="left:546px;top:521px"></i><div class="a" style="left:546px;top:521px"><svg width="14" height="14" viewBox="0 0 14 14"><path d="M3.6 5.8 L6 9.2 L10.2 3.9" fill="none" stroke="#22a322" stroke-width="2" stroke-linecap="round" stroke-linejoin="round"/></svg></div>
<i class="cb" style="left:694px;top:521px"></i><div class="a" style="left:694px;top:521px"><svg width="14" height="14" viewBox="0 0 14 14"><path d="M3.6 5.8 L6 9.2 L10.2 3.9" fill="none" stroke="#22a322" stroke-width="2" stroke-linecap="round" stroke-linejoin="round"/></svg></div>
<i class="cb" style="left:842px;top:521px"></i><div class="a" style="left:842px;top:521px"><svg width="14" height="14" viewBox="0 0 14 14"><path d="M3.6 5.8 L6 9.2 L10.2 3.9" fill="none" stroke="#22a322" stroke-width="2" stroke-linecap="round" stroke-linejoin="round"/></svg></div>
<div class="a" style="left:29px;top:540px;width:231px;height:1px;background:#c5d6ee"></div>
<div class="a" style="left:331px;top:540px;width:593px;height:1px;background:#c5d8f1"></div>
<div class="a hcell" style="left:29px;top:541px;width:17px;height:24px"></div>
<div class="a hcell" style="left:47px;top:541px;width:212px;height:24px"></div>
<div class="a txt" style="left:48px;top:547px">Печатные формы</div>
<div class="a" style="left:331px;top:541px;width:592px;height:24px;background:#fff"></div>
<div class="a" style="left:263px;top:541px;width:67px;height:24px;border:1px solid #8eaad0;background:#fff"></div>
<div class="a" style="left:285px;top:541px;width:1px;height:24px;background:#8eaad0"></div>
<div class="a" style="left:307px;top:541px;width:1px;height:24px;background:#8eaad0"></div>
<div class="a" style="left:262px;top:541px"><svg width="20" height="20" viewBox="0 0 20 20"><path d="M5.9 12 L10 15.9 L18 8.5" fill="none" stroke="#7f7c77" stroke-width="2.7" stroke-linecap="round" stroke-linejoin="round"/><path d="M5.9 12 L10 15.9 L18 8.5" fill="none" stroke="#a19e99" stroke-width="1.3" stroke-linecap="round" stroke-linejoin="round"/></svg></div><div class="a" style="left:282px;top:541px"><svg width="20" height="20" viewBox="0 0 20 20"><g fill="#aeb3ba" opacity="0.7"><rect x="6.90" y="5.00" width="2.6" height="1.4"/><rect x="6.90" y="17.60" width="2.6" height="1.4"/><rect x="6.90" y="5.00" width="1.4" height="2.6"/><rect x="19.50" y="5.00" width="1.4" height="2.6"/><rect x="10.70" y="5.00" width="2.6" height="1.4"/><rect x="10.70" y="17.60" width="2.6" height="1.4"/><rect x="6.90" y="8.80" width="1.4" height="2.6"/><rect x="19.50" y="8.80" width="1.4" height="2.6"/><rect x="14.50" y="5.00" width="2.6" height="1.4"/><rect x="14.50" y="17.60" width="2.6" height="1.4"/><rect x="6.90" y="12.60" width="1.4" height="2.6"/><rect x="19.50" y="12.60" width="1.4" height="2.6"/><rect x="18.30" y="5.00" width="2.6" height="1.4"/><rect x="18.30" y="17.60" width="2.6" height="1.4"/><rect x="6.90" y="16.40" width="1.4" height="2.6"/><rect x="19.50" y="16.40" width="1.4" height="2.6"/></g><g fill="#747474" opacity="1"><rect x="6.20" y="4.30" width="2.6" height="1.35"/><rect x="6.20" y="16.95" width="2.6" height="1.35"/><rect x="6.20" y="4.30" width="1.35" height="2.6"/><rect x="18.85" y="4.30" width="1.35" height="2.6"/><rect x="10.00" y="4.30" width="2.6" height="1.35"/><rect x="10.00" y="16.95" width="2.6" height="1.35"/><rect x="6.20" y="8.10" width="1.35" height="2.6"/><rect x="18.85" y="8.10" width="1.35" height="2.6"/><rect x="13.80" y="4.30" width="2.6" height="1.35"/><rect x="13.80" y="16.95" width="2.6" height="1.35"/><rect x="6.20" y="11.90" width="1.35" height="2.6"/><rect x="18.85" y="11.90" width="1.35" height="2.6"/><rect x="17.60" y="4.30" width="2.6" height="1.35"/><rect x="17.60" y="16.95" width="2.6" height="1.35"/><rect x="6.20" y="15.70" width="1.35" height="2.6"/><rect x="18.85" y="15.70" width="1.35" height="2.6"/></g></svg></div><div class="a" style="left:306px;top:541px"><svg width="20" height="20" viewBox="0 0 20 20"><path d="M7.7 7.9 L16.2 16.3 M16.2 7.9 L7.7 16.3" fill="none" stroke="#7d7b78" stroke-width="3.2" stroke-linecap="round"/><path d="M7.7 7.9 L16.2 16.3 M16.2 7.9 L7.7 16.3" fill="none" stroke="#a3a19d" stroke-width="1.6" stroke-linecap="round"/></svg></div>
<i class="cb" style="left:398px;top:546px"></i><div class="a" style="left:398px;top:546px"><svg width="14" height="14" viewBox="0 0 14 14"><path d="M3.6 5.8 L6 9.2 L10.2 3.9" fill="none" stroke="#22a322" stroke-width="2" stroke-linecap="round" stroke-linejoin="round"/></svg></div>
<i class="cb" style="left:546px;top:546px"></i><div class="a" style="left:546px;top:546px"><svg width="14" height="14" viewBox="0 0 14 14"><path d="M3.6 5.8 L6 9.2 L10.2 3.9" fill="none" stroke="#22a322" stroke-width="2" stroke-linecap="round" stroke-linejoin="round"/></svg></div>
<i class="cb" style="left:694px;top:546px"></i><div class="a" style="left:694px;top:546px"><svg width="14" height="14" viewBox="0 0 14 14"><path d="M3.6 5.8 L6 9.2 L10.2 3.9" fill="none" stroke="#22a322" stroke-width="2" stroke-linecap="round" stroke-linejoin="round"/></svg></div>
<i class="cb" style="left:842px;top:546px"></i><div class="a" style="left:842px;top:546px"><svg width="14" height="14" viewBox="0 0 14 14"><path d="M3.6 5.8 L6 9.2 L10.2 3.9" fill="none" stroke="#22a322" stroke-width="2" stroke-linecap="round" stroke-linejoin="round"/></svg></div>
<div class="a" style="left:29px;top:565px;width:231px;height:1px;background:#c5d6ee"></div>
<div class="a" style="left:331px;top:565px;width:593px;height:1px;background:#c5d8f1"></div>
<div class="a hcell" style="left:29px;top:566px;width:17px;height:24px"></div>
<div class="a hcell" style="left:47px;top:566px;width:212px;height:24px"></div>
<div class="a txt" style="left:48px;top:572px">Печать штрих-кода</div>
<div class="a" style="left:331px;top:566px;width:592px;height:24px;background:#faf9f2"></div>
<div class="a" style="left:263px;top:566px;width:67px;height:24px;border:1px solid #8eaad0;background:#faf9f2"></div>
<div class="a" style="left:285px;top:566px;width:1px;height:24px;background:#8eaad0"></div>
<div class="a" style="left:307px;top:566px;width:1px;height:24px;background:#8eaad0"></div>
<div class="a" style="left:262px;top:566px"><svg width="20" height="20" viewBox="0 0 20 20"><path d="M5.9 12 L10 15.9 L18 8.5" fill="none" stroke="#7f7c77" stroke-width="2.7" stroke-linecap="round" stroke-linejoin="round"/><path d="M5.9 12 L10 15.9 L18 8.5" fill="none" stroke="#a19e99" stroke-width="1.3" stroke-linecap="round" stroke-linejoin="round"/></svg></div><div class="a" style="left:282px;top:566px"><svg width="20" height="20" viewBox="0 0 20 20"><g fill="#aeb3ba" opacity="0.7"><rect x="6.90" y="5.00" width="2.6" height="1.4"/><rect x="6.90" y="17.60" width="2.6" height="1.4"/><rect x="6.90" y="5.00" width="1.4" height="2.6"/><rect x="19.50" y="5.00" width="1.4" height="2.6"/><rect x="10.70" y="5.00" width="2.6" height="1.4"/><rect x="10.70" y="17.60" width="2.6" height="1.4"/><rect x="6.90" y="8.80" width="1.4" height="2.6"/><rect x="19.50" y="8.80" width="1.4" height="2.6"/><rect x="14.50" y="5.00" width="2.6" height="1.4"/><rect x="14.50" y="17.60" width="2.6" height="1.4"/><rect x="6.90" y="12.60" width="1.4" height="2.6"/><rect x="19.50" y="12.60" width="1.4" height="2.6"/><rect x="18.30" y="5.00" width="2.6" height="1.4"/><rect x="18.30" y="17.60" width="2.6" height="1.4"/><rect x="6.90" y="16.40" width="1.4" height="2.6"/><rect x="19.50" y="16.40" width="1.4" height="2.6"/></g><g fill="#747474" opacity="1"><rect x="6.20" y="4.30" width="2.6" height="1.35"/><rect x="6.20" y="16.95" width="2.6" height="1.35"/><rect x="6.20" y="4.30" width="1.35" height="2.6"/><rect x="18.85" y="4.30" width="1.35" height="2.6"/><rect x="10.00" y="4.30" width="2.6" height="1.35"/><rect x="10.00" y="16.95" width="2.6" height="1.35"/><rect x="6.20" y="8.10" width="1.35" height="2.6"/><rect x="18.85" y="8.10" width="1.35" height="2.6"/><rect x="13.80" y="4.30" width="2.6" height="1.35"/><rect x="13.80" y="16.95" width="2.6" height="1.35"/><rect x="6.20" y="11.90" width="1.35" height="2.6"/><rect x="18.85" y="11.90" width="1.35" height="2.6"/><rect x="17.60" y="4.30" width="2.6" height="1.35"/><rect x="17.60" y="16.95" width="2.6" height="1.35"/><rect x="6.20" y="15.70" width="1.35" height="2.6"/><rect x="18.85" y="15.70" width="1.35" height="2.6"/></g></svg></div><div class="a" style="left:306px;top:566px"><svg width="20" height="20" viewBox="0 0 20 20"><path d="M7.7 7.9 L16.2 16.3 M16.2 7.9 L7.7 16.3" fill="none" stroke="#7d7b78" stroke-width="3.2" stroke-linecap="round"/><path d="M7.7 7.9 L16.2 16.3 M16.2 7.9 L7.7 16.3" fill="none" stroke="#a3a19d" stroke-width="1.6" stroke-linecap="round"/></svg></div>
<i class="cb" style="left:398px;top:571px"></i>
<i class="cb" style="left:546px;top:571px"></i>
<i class="cb" style="left:694px;top:571px"></i>
<i class="cb" style="left:842px;top:571px"></i>
<div class="a" style="left:29px;top:590px;width:231px;height:1px;background:#c5d6ee"></div>
<div class="a" style="left:331px;top:590px;width:593px;height:1px;background:#c5d8f1"></div>
<div class="a hcell" style="left:29px;top:591px;width:17px;height:24px"></div>
<div class="a hcell" style="left:47px;top:591px;width:212px;height:24px"></div>
<div class="a txt" style="left:48px;top:597px">Просмотр журнала подписей</div>
<div class="a" style="left:331px;top:591px;width:592px;height:24px;background:#fff"></div>
<div class="a" style="left:263px;top:591px;width:67px;height:24px;border:1px solid #8eaad0;background:#fff"></div>
<div class="a" style="left:285px;top:591px;width:1px;height:24px;background:#8eaad0"></div>
<div class="a" style="left:307px;top:591px;width:1px;height:24px;background:#8eaad0"></div>
<div class="a" style="left:262px;top:591px"><svg width="20" height="20" viewBox="0 0 20 20"><path d="M5.9 12 L10 15.9 L18 8.5" fill="none" stroke="#7f7c77" stroke-width="2.7" stroke-linecap="round" stroke-linejoin="round"/><path d="M5.9 12 L10 15.9 L18 8.5" fill="none" stroke="#a19e99" stroke-width="1.3" stroke-linecap="round" stroke-linejoin="round"/></svg></div><div class="a" style="left:282px;top:591px"><svg width="20" height="20" viewBox="0 0 20 20"><g fill="#aeb3ba" opacity="0.7"><rect x="6.90" y="5.00" width="2.6" height="1.4"/><rect x="6.90" y="17.60" width="2.6" height="1.4"/><rect x="6.90" y="5.00" width="1.4" height="2.6"/><rect x="19.50" y="5.00" width="1.4" height="2.6"/><rect x="10.70" y="5.00" width="2.6" height="1.4"/><rect x="10.70" y="17.60" width="2.6" height="1.4"/><rect x="6.90" y="8.80" width="1.4" height="2.6"/><rect x="19.50" y="8.80" width="1.4" height="2.6"/><rect x="14.50" y="5.00" width="2.6" height="1.4"/><rect x="14.50" y="17.60" width="2.6" height="1.4"/><rect x="6.90" y="12.60" width="1.4" height="2.6"/><rect x="19.50" y="12.60" width="1.4" height="2.6"/><rect x="18.30" y="5.00" width="2.6" height="1.4"/><rect x="18.30" y="17.60" width="2.6" height="1.4"/><rect x="6.90" y="16.40" width="1.4" height="2.6"/><rect x="19.50" y="16.40" width="1.4" height="2.6"/></g><g fill="#747474" opacity="1"><rect x="6.20" y="4.30" width="2.6" height="1.35"/><rect x="6.20" y="16.95" width="2.6" height="1.35"/><rect x="6.20" y="4.30" width="1.35" height="2.6"/><rect x="18.85" y="4.30" width="1.35" height="2.6"/><rect x="10.00" y="4.30" width="2.6" height="1.35"/><rect x="10.00" y="16.95" width="2.6" height="1.35"/><rect x="6.20" y="8.10" width="1.35" height="2.6"/><rect x="18.85" y="8.10" width="1.35" height="2.6"/><rect x="13.80" y="4.30" width="2.6" height="1.35"/><rect x="13.80" y="16.95" width="2.6" height="1.35"/><rect x="6.20" y="11.90" width="1.35" height="2.6"/><rect x="18.85" y="11.90" width="1.35" height="2.6"/><rect x="17.60" y="4.30" width="2.6" height="1.35"/><rect x="17.60" y="16.95" width="2.6" height="1.35"/><rect x="6.20" y="15.70" width="1.35" height="2.6"/><rect x="18.85" y="15.70" width="1.35" height="2.6"/></g></svg></div><div class="a" style="left:306px;top:591px"><svg width="20" height="20" viewBox="0 0 20 20"><path d="M7.7 7.9 L16.2 16.3 M16.2 7.9 L7.7 16.3" fill="none" stroke="#7d7b78" stroke-width="3.2" stroke-linecap="round"/><path d="M7.7 7.9 L16.2 16.3 M16.2 7.9 L7.7 16.3" fill="none" stroke="#a3a19d" stroke-width="1.6" stroke-linecap="round"/></svg></div>
<i class="cb" style="left:398px;top:596px"></i><div class="a" style="left:398px;top:596px"><svg width="14" height="14" viewBox="0 0 14 14"><path d="M3.6 5.8 L6 9.2 L10.2 3.9" fill="none" stroke="#22a322" stroke-width="2" stroke-linecap="round" stroke-linejoin="round"/></svg></div>
<i class="cb" style="left:546px;top:596px"></i><div class="a" style="left:546px;top:596px"><svg width="14" height="14" viewBox="0 0 14 14"><path d="M3.6 5.8 L6 9.2 L10.2 3.9" fill="none" stroke="#22a322" stroke-width="2" stroke-linecap="round" stroke-linejoin="round"/></svg></div>
<i class="cb" style="left:694px;top:596px"></i><div class="a" style="left:694px;top:596px"><svg width="14" height="14" viewBox="0 0 14 14"><path d="M3.6 5.8 L6 9.2 L10.2 3.9" fill="none" stroke="#22a322" stroke-width="2" stroke-linecap="round" stroke-linejoin="round"/></svg></div>
<i class="cb" style="left:842px;top:596px"></i><div class="a" style="left:842px;top:596px"><svg width="14" height="14" viewBox="0 0 14 14"><path d="M3.6 5.8 L6 9.2 L10.2 3.9" fill="none" stroke="#22a322" stroke-width="2" stroke-linecap="round" stroke-linejoin="round"/></svg></div>
<div class="a" style="left:29px;top:615px;width:231px;height:1px;background:#c5d6ee"></div>
<div class="a" style="left:331px;top:615px;width:593px;height:1px;background:#c5d8f1"></div>
<div class="a hcell" style="left:29px;top:616px;width:17px;height:24px"></div>
<div class="a hcell" style="left:47px;top:616px;width:212px;height:24px"></div>
<div class="a txt" style="left:48px;top:622px">Просмотр истории</div>
<div class="a" style="left:331px;top:616px;width:592px;height:24px;background:#faf9f2"></div>
<div class="a" style="left:263px;top:616px;width:67px;height:24px;border:1px solid #8eaad0;background:#faf9f2"></div>
<div class="a" style="left:285px;top:616px;width:1px;height:24px;background:#8eaad0"></div>
<div class="a" style="left:307px;top:616px;width:1px;height:24px;background:#8eaad0"></div>
<div class="a" style="left:262px;top:616px"><svg width="20" height="20" viewBox="0 0 20 20"><path d="M5.9 12 L10 15.9 L18 8.5" fill="none" stroke="#7f7c77" stroke-width="2.7" stroke-linecap="round" stroke-linejoin="round"/><path d="M5.9 12 L10 15.9 L18 8.5" fill="none" stroke="#a19e99" stroke-width="1.3" stroke-linecap="round" stroke-linejoin="round"/></svg></div><div class="a" style="left:282px;top:616px"><svg width="20" height="20" viewBox="0 0 20 20"><g fill="#aeb3ba" opacity="0.7"><rect x="6.90" y="5.00" width="2.6" height="1.4"/><rect x="6.90" y="17.60" width="2.6" height="1.4"/><rect x="6.90" y="5.00" width="1.4" height="2.6"/><rect x="19.50" y="5.00" width="1.4" height="2.6"/><rect x="10.70" y="5.00" width="2.6" height="1.4"/><rect x="10.70" y="17.60" width="2.6" height="1.4"/><rect x="6.90" y="8.80" width="1.4" height="2.6"/><rect x="19.50" y="8.80" width="1.4" height="2.6"/><rect x="14.50" y="5.00" width="2.6" height="1.4"/><rect x="14.50" y="17.60" width="2.6" height="1.4"/><rect x="6.90" y="12.60" width="1.4" height="2.6"/><rect x="19.50" y="12.60" width="1.4" height="2.6"/><rect x="18.30" y="5.00" width="2.6" height="1.4"/><rect x="18.30" y="17.60" width="2.6" height="1.4"/><rect x="6.90" y="16.40" width="1.4" height="2.6"/><rect x="19.50" y="16.40" width="1.4" height="2.6"/></g><g fill="#747474" opacity="1"><rect x="6.20" y="4.30" width="2.6" height="1.35"/><rect x="6.20" y="16.95" width="2.6" height="1.35"/><rect x="6.20" y="4.30" width="1.35" height="2.6"/><rect x="18.85" y="4.30" width="1.35" height="2.6"/><rect x="10.00" y="4.30" width="2.6" height="1.35"/><rect x="10.00" y="16.95" width="2.6" height="1.35"/><rect x="6.20" y="8.10" width="1.35" height="2.6"/><rect x="18.85" y="8.10" width="1.35" height="2.6"/><rect x="13.80" y="4.30" width="2.6" height="1.35"/><rect x="13.80" y="16.95" width="2.6" height="1.35"/><rect x="6.20" y="11.90" width="1.35" height="2.6"/><rect x="18.85" y="11.90" width="1.35" height="2.6"/><rect x="17.60" y="4.30" width="2.6" height="1.35"/><rect x="17.60" y="16.95" width="2.6" height="1.35"/><rect x="6.20" y="15.70" width="1.35" height="2.6"/><rect x="18.85" y="15.70" width="1.35" height="2.6"/></g></svg></div><div class="a" style="left:306px;top:616px"><svg width="20" height="20" viewBox="0 0 20 20"><path d="M7.7 7.9 L16.2 16.3 M16.2 7.9 L7.7 16.3" fill="none" stroke="#7d7b78" stroke-width="3.2" stroke-linecap="round"/><path d="M7.7 7.9 L16.2 16.3 M16.2 7.9 L7.7 16.3" fill="none" stroke="#a3a19d" stroke-width="1.6" stroke-linecap="round"/></svg></div>
<i class="cb" style="left:398px;top:621px"></i><div class="a" style="left:398px;top:621px"><svg width="14" height="14" viewBox="0 0 14 14"><path d="M3.6 5.8 L6 9.2 L10.2 3.9" fill="none" stroke="#22a322" stroke-width="2" stroke-linecap="round" stroke-linejoin="round"/></svg></div>
<i class="cb" style="left:546px;top:621px"></i><div class="a" style="left:546px;top:621px"><svg width="14" height="14" viewBox="0 0 14 14"><path d="M3.6 5.8 L6 9.2 L10.2 3.9" fill="none" stroke="#22a322" stroke-width="2" stroke-linecap="round" stroke-linejoin="round"/></svg></div>
<i class="cb" style="left:694px;top:621px"></i><div class="a" style="left:694px;top:621px"><svg width="14" height="14" viewBox="0 0 14 14"><path d="M3.6 5.8 L6 9.2 L10.2 3.9" fill="none" stroke="#22a322" stroke-width="2" stroke-linecap="round" stroke-linejoin="round"/></svg></div>
<i class="cb" style="left:842px;top:621px"></i><div class="a" style="left:842px;top:621px"><svg width="14" height="14" viewBox="0 0 14 14"><path d="M3.6 5.8 L6 9.2 L10.2 3.9" fill="none" stroke="#22a322" stroke-width="2" stroke-linecap="round" stroke-linejoin="round"/></svg></div>
<div class="a" style="left:29px;top:640px;width:231px;height:1px;background:#c5d6ee"></div>
<div class="a" style="left:331px;top:640px;width:593px;height:1px;background:#c5d8f1"></div>
<div class="a hcell" style="left:29px;top:641px;width:17px;height:24px"></div>
<div class="a hcell" style="left:47px;top:641px;width:212px;height:24px"></div>
<div class="a txt" style="left:48px;top:647px">Редактирование журнала передач</div>
<div class="a" style="left:331px;top:641px;width:592px;height:24px;background:#fff"></div>
<div class="a" style="left:263px;top:641px;width:67px;height:24px;border:1px solid #8eaad0;background:#fff"></div>
<div class="a" style="left:285px;top:641px;width:1px;height:24px;background:#8eaad0"></div>
<div class="a" style="left:307px;top:641px;width:1px;height:24px;background:#8eaad0"></div>
<div class="a" style="left:262px;top:641px"><svg width="20" height="20" viewBox="0 0 20 20"><path d="M5.9 12 L10 15.9 L18 8.5" fill="none" stroke="#7f7c77" stroke-width="2.7" stroke-linecap="round" stroke-linejoin="round"/><path d="M5.9 12 L10 15.9 L18 8.5" fill="none" stroke="#a19e99" stroke-width="1.3" stroke-linecap="round" stroke-linejoin="round"/></svg></div><div class="a" style="left:282px;top:641px"><svg width="20" height="20" viewBox="0 0 20 20"><g fill="#aeb3ba" opacity="0.7"><rect x="6.90" y="5.00" width="2.6" height="1.4"/><rect x="6.90" y="17.60" width="2.6" height="1.4"/><rect x="6.90" y="5.00" width="1.4" height="2.6"/><rect x="19.50" y="5.00" width="1.4" height="2.6"/><rect x="10.70" y="5.00" width="2.6" height="1.4"/><rect x="10.70" y="17.60" width="2.6" height="1.4"/><rect x="6.90" y="8.80" width="1.4" height="2.6"/><rect x="19.50" y="8.80" width="1.4" height="2.6"/><rect x="14.50" y="5.00" width="2.6" height="1.4"/><rect x="14.50" y="17.60" width="2.6" height="1.4"/><rect x="6.90" y="12.60" width="1.4" height="2.6"/><rect x="19.50" y="12.60" width="1.4" height="2.6"/><rect x="18.30" y="5.00" width="2.6" height="1.4"/><rect x="18.30" y="17.60" width="2.6" height="1.4"/><rect x="6.90" y="16.40" width="1.4" height="2.6"/><rect x="19.50" y="16.40" width="1.4" height="2.6"/></g><g fill="#747474" opacity="1"><rect x="6.20" y="4.30" width="2.6" height="1.35"/><rect x="6.20" y="16.95" width="2.6" height="1.35"/><rect x="6.20" y="4.30" width="1.35" height="2.6"/><rect x="18.85" y="4.30" width="1.35" height="2.6"/><rect x="10.00" y="4.30" width="2.6" height="1.35"/><rect x="10.00" y="16.95" width="2.6" height="1.35"/><rect x="6.20" y="8.10" width="1.35" height="2.6"/><rect x="18.85" y="8.10" width="1.35" height="2.6"/><rect x="13.80" y="4.30" width="2.6" height="1.35"/><rect x="13.80" y="16.95" width="2.6" height="1.35"/><rect x="6.20" y="11.90" width="1.35" height="2.6"/><rect x="18.85" y="11.90" width="1.35" height="2.6"/><rect x="17.60" y="4.30" width="2.6" height="1.35"/><rect x="17.60" y="16.95" width="2.6" height="1.35"/><rect x="6.20" y="15.70" width="1.35" height="2.6"/><rect x="18.85" y="15.70" width="1.35" height="2.6"/></g></svg></div><div class="a" style="left:306px;top:641px"><svg width="20" height="20" viewBox="0 0 20 20"><path d="M7.7 7.9 L16.2 16.3 M16.2 7.9 L7.7 16.3" fill="none" stroke="#7d7b78" stroke-width="3.2" stroke-linecap="round"/><path d="M7.7 7.9 L16.2 16.3 M16.2 7.9 L7.7 16.3" fill="none" stroke="#a3a19d" stroke-width="1.6" stroke-linecap="round"/></svg></div>
<i class="cb" style="left:398px;top:646px"></i><div class="a" style="left:398px;top:646px"><svg width="14" height="14" viewBox="0 0 14 14"><path d="M3.6 5.8 L6 9.2 L10.2 3.9" fill="none" stroke="#22a322" stroke-width="2" stroke-linecap="round" stroke-linejoin="round"/></svg></div>
<i class="cb" style="left:546px;top:646px"></i>
<i class="cb" style="left:694px;top:646px"></i>
<i class="cb" style="left:842px;top:646px"></i><div class="a" style="left:842px;top:646px"><svg width="14" height="14" viewBox="0 0 14 14"><path d="M3.6 5.8 L6 9.2 L10.2 3.9" fill="none" stroke="#22a322" stroke-width="2" stroke-linecap="round" stroke-linejoin="round"/></svg></div>
<div class="a" style="left:29px;top:665px;width:231px;height:1px;background:#c5d6ee"></div>
<div class="a" style="left:331px;top:665px;width:593px;height:1px;background:#c5d8f1"></div>
<div class="a hcell" style="left:29px;top:666px;width:17px;height:24px"></div>
<div class="a hcell" style="left:47px;top:666px;width:212px;height:24px"></div>
<div class="a txt" style="left:48px;top:672px">Редактирование полей карточки</div>
<div class="a" style="left:331px;top:666px;width:592px;height:24px;background:#faf9f2"></div>
<div class="a" style="left:263px;top:666px;width:67px;height:24px;border:1px solid #8eaad0;background:#faf9f2"></div>
<div class="a" style="left:285px;top:666px;width:1px;height:24px;background:#8eaad0"></div>
<div class="a" style="left:307px;top:666px;width:1px;height:24px;background:#8eaad0"></div>
<div class="a" style="left:262px;top:666px"><svg width="20" height="20" viewBox="0 0 20 20"><path d="M5.9 12 L10 15.9 L18 8.5" fill="none" stroke="#7f7c77" stroke-width="2.7" stroke-linecap="round" stroke-linejoin="round"/><path d="M5.9 12 L10 15.9 L18 8.5" fill="none" stroke="#a19e99" stroke-width="1.3" stroke-linecap="round" stroke-linejoin="round"/></svg></div><div class="a" style="left:282px;top:666px"><svg width="20" height="20" viewBox="0 0 20 20"><g fill="#aeb3ba" opacity="0.7"><rect x="6.90" y="5.00" width="2.6" height="1.4"/><rect x="6.90" y="17.60" width="2.6" height="1.4"/><rect x="6.90" y="5.00" width="1.4" height="2.6"/><rect x="19.50" y="5.00" width="1.4" height="2.6"/><rect x="10.70" y="5.00" width="2.6" height="1.4"/><rect x="10.70" y="17.60" width="2.6" height="1.4"/><rect x="6.90" y="8.80" width="1.4" height="2.6"/><rect x="19.50" y="8.80" width="1.4" height="2.6"/><rect x="14.50" y="5.00" width="2.6" height="1.4"/><rect x="14.50" y="17.60" width="2.6" height="1.4"/><rect x="6.90" y="12.60" width="1.4" height="2.6"/><rect x="19.50" y="12.60" width="1.4" height="2.6"/><rect x="18.30" y="5.00" width="2.6" height="1.4"/><rect x="18.30" y="17.60" width="2.6" height="1.4"/><rect x="6.90" y="16.40" width="1.4" height="2.6"/><rect x="19.50" y="16.40" width="1.4" height="2.6"/></g><g fill="#747474" opacity="1"><rect x="6.20" y="4.30" width="2.6" height="1.35"/><rect x="6.20" y="16.95" width="2.6" height="1.35"/><rect x="6.20" y="4.30" width="1.35" height="2.6"/><rect x="18.85" y="4.30" width="1.35" height="2.6"/><rect x="10.00" y="4.30" width="2.6" height="1.35"/><rect x="10.00" y="16.95" width="2.6" height="1.35"/><rect x="6.20" y="8.10" width="1.35" height="2.6"/><rect x="18.85" y="8.10" width="1.35" height="2.6"/><rect x="13.80" y="4.30" width="2.6" height="1.35"/><rect x="13.80" y="16.95" width="2.6" height="1.35"/><rect x="6.20" y="11.90" width="1.35" height="2.6"/><rect x="18.85" y="11.90" width="1.35" height="2.6"/><rect x="17.60" y="4.30" width="2.6" height="1.35"/><rect x="17.60" y="16.95" width="2.6" height="1.35"/><rect x="6.20" y="15.70" width="1.35" height="2.6"/><rect x="18.85" y="15.70" width="1.35" height="2.6"/></g></svg></div><div class="a" style="left:306px;top:666px"><svg width="20" height="20" viewBox="0 0 20 20"><path d="M7.7 7.9 L16.2 16.3 M16.2 7.9 L7.7 16.3" fill="none" stroke="#7d7b78" stroke-width="3.2" stroke-linecap="round"/><path d="M7.7 7.9 L16.2 16.3 M16.2 7.9 L7.7 16.3" fill="none" stroke="#a3a19d" stroke-width="1.6" stroke-linecap="round"/></svg></div>
<i class="cb" style="left:398px;top:671px"></i><div class="a" style="left:398px;top:671px"><svg width="14" height="14" viewBox="0 0 14 14"><path d="M3.6 5.8 L6 9.2 L10.2 3.9" fill="none" stroke="#22a322" stroke-width="2" stroke-linecap="round" stroke-linejoin="round"/></svg></div>
<i class="cb" style="left:546px;top:671px"></i><div class="a" style="left:546px;top:671px"><svg width="14" height="14" viewBox="0 0 14 14"><path d="M3.6 5.8 L6 9.2 L10.2 3.9" fill="none" stroke="#22a322" stroke-width="2" stroke-linecap="round" stroke-linejoin="round"/></svg></div>
<i class="cb" style="left:694px;top:671px"></i><div class="a" style="left:694px;top:671px"><svg width="14" height="14" viewBox="0 0 14 14"><path d="M3.6 5.8 L6 9.2 L10.2 3.9" fill="none" stroke="#22a322" stroke-width="2" stroke-linecap="round" stroke-linejoin="round"/></svg></div>
<i class="cb" style="left:842px;top:671px"></i><div class="a" style="left:842px;top:671px"><svg width="14" height="14" viewBox="0 0 14 14"><path d="M3.6 5.8 L6 9.2 L10.2 3.9" fill="none" stroke="#22a322" stroke-width="2" stroke-linecap="round" stroke-linejoin="round"/></svg></div>
<div class="a" style="left:29px;top:690px;width:231px;height:1px;background:#c5d6ee"></div>
<div class="a" style="left:331px;top:690px;width:593px;height:1px;background:#c5d8f1"></div>
<div class="a hcell" style="left:29px;top:691px;width:17px;height:24px"></div>
<div class="a hcell" style="left:47px;top:691px;width:212px;height:24px"></div>
<div class="a txt" style="left:48px;top:697px">Редактирование файлов</div>
<div class="a" style="left:331px;top:691px;width:592px;height:24px;background:#fff"></div>
<div class="a" style="left:263px;top:691px;width:67px;height:24px;border:1px solid #8eaad0;background:#fff"></div>
<div class="a" style="left:285px;top:691px;width:1px;height:24px;background:#8eaad0"></div>
<div class="a" style="left:307px;top:691px;width:1px;height:24px;background:#8eaad0"></div>
<div class="a" style="left:262px;top:691px"><svg width="20" height="20" viewBox="0 0 20 20"><path d="M5.9 12 L10 15.9 L18 8.5" fill="none" stroke="#7f7c77" stroke-width="2.7" stroke-linecap="round" stroke-linejoin="round"/><path d="M5.9 12 L10 15.9 L18 8.5" fill="none" stroke="#a19e99" stroke-width="1.3" stroke-linecap="round" stroke-linejoin="round"/></svg></div><div class="a" style="left:282px;top:691px"><svg width="20" height="20" viewBox="0 0 20 20"><g fill="#aeb3ba" opacity="0.7"><rect x="6.90" y="5.00" width="2.6" height="1.4"/><rect x="6.90" y="17.60" width="2.6" height="1.4"/><rect x="6.90" y="5.00" width="1.4" height="2.6"/><rect x="19.50" y="5.00" width="1.4" height="2.6"/><rect x="10.70" y="5.00" width="2.6" height="1.4"/><rect x="10.70" y="17.60" width="2.6" height="1.4"/><rect x="6.90" y="8.80" width="1.4" height="2.6"/><rect x="19.50" y="8.80" width="1.4" height="2.6"/><rect x="14.50" y="5.00" width="2.6" height="1.4"/><rect x="14.50" y="17.60" width="2.6" height="1.4"/><rect x="6.90" y="12.60" width="1.4" height="2.6"/><rect x="19.50" y="12.60" width="1.4" height="2.6"/><rect x="18.30" y="5.00" width="2.6" height="1.4"/><rect x="18.30" y="17.60" width="2.6" height="1.4"/><rect x="6.90" y="16.40" width="1.4" height="2.6"/><rect x="19.50" y="16.40" width="1.4" height="2.6"/></g><g fill="#747474" opacity="1"><rect x="6.20" y="4.30" width="2.6" height="1.35"/><rect x="6.20" y="16.95" width="2.6" height="1.35"/><rect x="6.20" y="4.30" width="1.35" height="2.6"/><rect x="18.85" y="4.30" width="1.35" height="2.6"/><rect x="10.00" y="4.30" width="2.6" height="1.35"/><rect x="10.00" y="16.95" width="2.6" height="1.35"/><rect x="6.20" y="8.10" width="1.35" height="2.6"/><rect x="18.85" y="8.10" width="1.35" height="2.6"/><rect x="13.80" y="4.30" width="2.6" height="1.35"/><rect x="13.80" y="16.95" width="2.6" height="1.35"/><rect x="6.20" y="11.90" width="1.35" height="2.6"/><rect x="18.85" y="11.90" width="1.35" height="2.6"/><rect x="17.60" y="4.30" width="2.6" height="1.35"/><rect x="17.60" y="16.95" width="2.6" height="1.35"/><rect x="6.20" y="15.70" width="1.35" height="2.6"/><rect x="18.85" y="15.70" width="1.35" height="2.6"/></g></svg></div><div class="a" style="left:306px;top:691px"><svg width="20" height="20" viewBox="0 0 20 20"><path d="M7.7 7.9 L16.2 16.3 M16.2 7.9 L7.7 16.3" fill="none" stroke="#7d7b78" stroke-width="3.2" stroke-linecap="round"/><path d="M7.7 7.9 L16.2 16.3 M16.2 7.9 L7.7 16.3" fill="none" stroke="#a3a19d" stroke-width="1.6" stroke-linecap="round"/></svg></div>
<i class="cb" style="left:398px;top:696px"></i><div class="a" style="left:398px;top:696px"><svg width="14" height="14" viewBox="0 0 14 14"><path d="M3.6 5.8 L6 9.2 L10.2 3.9" fill="none" stroke="#22a322" stroke-width="2" stroke-linecap="round" stroke-linejoin="round"/></svg></div>
<i class="cb" style="left:546px;top:696px"></i><div class="a" style="left:546px;top:696px"><svg width="14" height="14" viewBox="0 0 14 14"><path d="M3.6 5.8 L6 9.2 L10.2 3.9" fill="none" stroke="#22a322" stroke-width="2" stroke-linecap="round" stroke-linejoin="round"/></svg></div>
<i class="cb" style="left:694px;top:696px"></i><div class="a" style="left:694px;top:696px"><svg width="14" height="14" viewBox="0 0 14 14"><path d="M3.6 5.8 L6 9.2 L10.2 3.9" fill="none" stroke="#22a322" stroke-width="2" stroke-linecap="round" stroke-linejoin="round"/></svg></div>
<i class="cb" style="left:842px;top:696px"></i><div class="a" style="left:842px;top:696px"><svg width="14" height="14" viewBox="0 0 14 14"><path d="M3.6 5.8 L6 9.2 L10.2 3.9" fill="none" stroke="#22a322" stroke-width="2" stroke-linecap="round" stroke-linejoin="round"/></svg></div>
<div class="a" style="left:29px;top:715px;width:231px;height:1px;background:#c5d6ee"></div>
<div class="a" style="left:331px;top:715px;width:593px;height:1px;background:#c5d8f1"></div>
<div class="a hcell" style="left:29px;top:716px;width:17px;height:24px"></div>
<div class="a hcell" style="left:47px;top:716px;width:212px;height:24px"></div>
<div class="a txt" style="left:48px;top:722px">Списать Документ в Дело</div>
<div class="a" style="left:331px;top:716px;width:592px;height:24px;background:#faf9f2"></div>
<div class="a" style="left:263px;top:716px;width:67px;height:24px;border:1px solid #8eaad0;background:#faf9f2"></div>
<div class="a" style="left:285px;top:716px;width:1px;height:24px;background:#8eaad0"></div>
<div class="a" style="left:307px;top:716px;width:1px;height:24px;background:#8eaad0"></div>
<div class="a" style="left:262px;top:716px"><svg width="20" height="20" viewBox="0 0 20 20"><path d="M5.9 12 L10 15.9 L18 8.5" fill="none" stroke="#7f7c77" stroke-width="2.7" stroke-linecap="round" stroke-linejoin="round"/><path d="M5.9 12 L10 15.9 L18 8.5" fill="none" stroke="#a19e99" stroke-width="1.3" stroke-linecap="round" stroke-linejoin="round"/></svg></div><div class="a" style="left:282px;top:716px"><svg width="20" height="20" viewBox="0 0 20 20"><g fill="#aeb3ba" opacity="0.7"><rect x="6.90" y="5.00" width="2.6" height="1.4"/><rect x="6.90" y="17.60" width="2.6" height="1.4"/><rect x="6.90" y="5.00" width="1.4" height="2.6"/><rect x="19.50" y="5.00" width="1.4" height="2.6"/><rect x="10.70" y="5.00" width="2.6" height="1.4"/><rect x="10.70" y="17.60" width="2.6" height="1.4"/><rect x="6.90" y="8.80" width="1.4" height="2.6"/><rect x="19.50" y="8.80" width="1.4" height="2.6"/><rect x="14.50" y="5.00" width="2.6" height="1.4"/><rect x="14.50" y="17.60" width="2.6" height="1.4"/><rect x="6.90" y="12.60" width="1.4" height="2.6"/><rect x="19.50" y="12.60" width="1.4" height="2.6"/><rect x="18.30" y="5.00" width="2.6" height="1.4"/><rect x="18.30" y="17.60" width="2.6" height="1.4"/><rect x="6.90" y="16.40" width="1.4" height="2.6"/><rect x="19.50" y="16.40" width="1.4" height="2.6"/></g><g fill="#747474" opacity="1"><rect x="6.20" y="4.30" width="2.6" height="1.35"/><rect x="6.20" y="16.95" width="2.6" height="1.35"/><rect x="6.20" y="4.30" width="1.35" height="2.6"/><rect x="18.85" y="4.30" width="1.35" height="2.6"/><rect x="10.00" y="4.30" width="2.6" height="1.35"/><rect x="10.00" y="16.95" width="2.6" height="1.35"/><rect x="6.20" y="8.10" width="1.35" height="2.6"/><rect x="18.85" y="8.10" width="1.35" height="2.6"/><rect x="13.80" y="4.30" width="2.6" height="1.35"/><rect x="13.80" y="16.95" width="2.6" height="1.35"/><rect x="6.20" y="11.90" width="1.35" height="2.6"/><rect x="18.85" y="11.90" width="1.35" height="2.6"/><rect x="17.60" y="4.30" width="2.6" height="1.35"/><rect x="17.60" y="16.95" width="2.6" height="1.35"/><rect x="6.20" y="15.70" width="1.35" height="2.6"/><rect x="18.85" y="15.70" width="1.35" height="2.6"/></g></svg></div><div class="a" style="left:306px;top:716px"><svg width="20" height="20" viewBox="0 0 20 20"><path d="M7.7 7.9 L16.2 16.3 M16.2 7.9 L7.7 16.3" fill="none" stroke="#7d7b78" stroke-width="3.2" stroke-linecap="round"/><path d="M7.7 7.9 L16.2 16.3 M16.2 7.9 L7.7 16.3" fill="none" stroke="#a3a19d" stroke-width="1.6" stroke-linecap="round"/></svg></div>
<i class="cb" style="left:398px;top:721px"></i><div class="a" style="left:398px;top:721px"><svg width="14" height="14" viewBox="0 0 14 14"><path d="M3.6 5.8 L6 9.2 L10.2 3.9" fill="none" stroke="#22a322" stroke-width="2" stroke-linecap="round" stroke-linejoin="round"/></svg></div>
<i class="cb" style="left:546px;top:721px"></i><div class="a" style="left:546px;top:721px"><svg width="14" height="14" viewBox="0 0 14 14"><path d="M3.6 5.8 L6 9.2 L10.2 3.9" fill="none" stroke="#22a322" stroke-width="2" stroke-linecap="round" stroke-linejoin="round"/></svg></div>
<i class="cb" style="left:694px;top:721px"></i><div class="a" style="left:694px;top:721px"><svg width="14" height="14" viewBox="0 0 14 14"><path d="M3.6 5.8 L6 9.2 L10.2 3.9" fill="none" stroke="#22a322" stroke-width="2" stroke-linecap="round" stroke-linejoin="round"/></svg></div>
<i class="cb" style="left:842px;top:721px"></i><div class="a" style="left:842px;top:721px"><svg width="14" height="14" viewBox="0 0 14 14"><path d="M3.6 5.8 L6 9.2 L10.2 3.9" fill="none" stroke="#22a322" stroke-width="2" stroke-linecap="round" stroke-linejoin="round"/></svg></div>
<div class="a" style="left:29px;top:740px;width:231px;height:1px;background:#c5d6ee"></div>
<div class="a" style="left:331px;top:740px;width:593px;height:1px;background:#c5d8f1"></div>
<div class="a hcell" style="left:29px;top:741px;width:17px;height:24px"></div>
<div class="a hcell" style="left:47px;top:741px;width:212px;height:24px"></div>
<div class="a txt" style="left:48px;top:747px">Удаление</div>
<div class="a" style="left:331px;top:741px;width:592px;height:24px;background:#fff"></div>
<div class="a" style="left:263px;top:741px;width:67px;height:24px;border:1px solid #8eaad0;background:#fff"></div>
<div class="a" style="left:285px;top:741px;width:1px;height:24px;background:#8eaad0"></div>
<div class="a" style="left:307px;top:741px;width:1px;height:24px;background:#8eaad0"></div>
<div class="a" style="left:262px;top:741px"><svg width="20" height="20" viewBox="0 0 20 20"><path d="M5.9 12 L10 15.9 L18 8.5" fill="none" stroke="#7f7c77" stroke-width="2.7" stroke-linecap="round" stroke-linejoin="round"/><path d="M5.9 12 L10 15.9 L18 8.5" fill="none" stroke="#a19e99" stroke-width="1.3" stroke-linecap="round" stroke-linejoin="round"/></svg></div><div class="a" style="left:282px;top:741px"><svg width="20" height="20" viewBox="0 0 20 20"><g fill="#aeb3ba" opacity="0.7"><rect x="6.90" y="5.00" width="2.6" height="1.4"/><rect x="6.90" y="17.60" width="2.6" height="1.4"/><rect x="6.90" y="5.00" width="1.4" height="2.6"/><rect x="19.50" y="5.00" width="1.4" height="2.6"/><rect x="10.70" y="5.00" width="2.6" height="1.4"/><rect x="10.70" y="17.60" width="2.6" height="1.4"/><rect x="6.90" y="8.80" width="1.4" height="2.6"/><rect x="19.50" y="8.80" width="1.4" height="2.6"/><rect x="14.50" y="5.00" width="2.6" height="1.4"/><rect x="14.50" y="17.60" width="2.6" height="1.4"/><rect x="6.90" y="12.60" width="1.4" height="2.6"/><rect x="19.50" y="12.60" width="1.4" height="2.6"/><rect x="18.30" y="5.00" width="2.6" height="1.4"/><rect x="18.30" y="17.60" width="2.6" height="1.4"/><rect x="6.90" y="16.40" width="1.4" height="2.6"/><rect x="19.50" y="16.40" width="1.4" height="2.6"/></g><g fill="#747474" opacity="1"><rect x="6.20" y="4.30" width="2.6" height="1.35"/><rect x="6.20" y="16.95" width="2.6" height="1.35"/><rect x="6.20" y="4.30" width="1.35" height="2.6"/><rect x="18.85" y="4.30" width="1.35" height="2.6"/><rect x="10.00" y="4.30" width="2.6" height="1.35"/><rect x="10.00" y="16.95" width="2.6" height="1.35"/><rect x="6.20" y="8.10" width="1.35" height="2.6"/><rect x="18.85" y="8.10" width="1.35" height="2.6"/><rect x="13.80" y="4.30" width="2.6" height="1.35"/><rect x="13.80" y="16.95" width="2.6" height="1.35"/><rect x="6.20" y="11.90" width="1.35" height="2.6"/><rect x="18.85" y="11.90" width="1.35" height="2.6"/><rect x="17.60" y="4.30" width="2.6" height="1.35"/><rect x="17.60" y="16.95" width="2.6" height="1.35"/><rect x="6.20" y="15.70" width="1.35" height="2.6"/><rect x="18.85" y="15.70" width="1.35" height="2.6"/></g></svg></div><div class="a" style="left:306px;top:741px"><svg width="20" height="20" viewBox="0 0 20 20"><path d="M7.7 7.9 L16.2 16.3 M16.2 7.9 L7.7 16.3" fill="none" stroke="#7d7b78" stroke-width="3.2" stroke-linecap="round"/><path d="M7.7 7.9 L16.2 16.3 M16.2 7.9 L7.7 16.3" fill="none" stroke="#a3a19d" stroke-width="1.6" stroke-linecap="round"/></svg></div>
<i class="cb" style="left:398px;top:746px"></i>
<i class="cb" style="left:546px;top:746px"></i>
<i class="cb" style="left:694px;top:746px"></i><div class="a" style="left:694px;top:746px"><svg width="14" height="14" viewBox="0 0 14 14"><path d="M3.6 5.8 L6 9.2 L10.2 3.9" fill="none" stroke="#22a322" stroke-width="2" stroke-linecap="round" stroke-linejoin="round"/></svg></div>
<i class="cb" style="left:842px;top:746px"></i>
<div class="a" style="left:29px;top:765px;width:231px;height:1px;background:#c5d6ee"></div>
<div class="a" style="left:331px;top:765px;width:593px;height:1px;background:#c5d8f1"></div>
<div class="a hcell" style="left:29px;top:766px;width:17px;height:24px"></div>
<div class="a hcell" style="left:47px;top:766px;width:212px;height:24px"></div>
<div class="a txt" style="left:48px;top:772px">Удаление категории</div>
<div class="a" style="left:331px;top:766px;width:592px;height:24px;background:#faf9f2"></div>
<div class="a" style="left:263px;top:766px;width:67px;height:24px;border:1px solid #8eaad0;background:#faf9f2"></div>
<div class="a" style="left:285px;top:766px;width:1px;height:24px;background:#8eaad0"></div>
<div class="a" style="left:307px;top:766px;width:1px;height:24px;background:#8eaad0"></div>
<div class="a" style="left:262px;top:766px"><svg width="20" height="20" viewBox="0 0 20 20"><path d="M5.9 12 L10 15.9 L18 8.5" fill="none" stroke="#7f7c77" stroke-width="2.7" stroke-linecap="round" stroke-linejoin="round"/><path d="M5.9 12 L10 15.9 L18 8.5" fill="none" stroke="#a19e99" stroke-width="1.3" stroke-linecap="round" stroke-linejoin="round"/></svg></div><div class="a" style="left:282px;top:766px"><svg width="20" height="20" viewBox="0 0 20 20"><g fill="#aeb3ba" opacity="0.7"><rect x="6.90" y="5.00" width="2.6" height="1.4"/><rect x="6.90" y="17.60" width="2.6" height="1.4"/><rect x="6.90" y="5.00" width="1.4" height="2.6"/><rect x="19.50" y="5.00" width="1.4" height="2.6"/><rect x="10.70" y="5.00" width="2.6" height="1.4"/><rect x="10.70" y="17.60" width="2.6" height="1.4"/><rect x="6.90" y="8.80" width="1.4" height="2.6"/><rect x="19.50" y="8.80" width="1.4" height="2.6"/><rect x="14.50" y="5.00" width="2.6" height="1.4"/><rect x="14.50" y="17.60" width="2.6" height="1.4"/><rect x="6.90" y="12.60" width="1.4" height="2.6"/><rect x="19.50" y="12.60" width="1.4" height="2.6"/><rect x="18.30" y="5.00" width="2.6" height="1.4"/><rect x="18.30" y="17.60" width="2.6" height="1.4"/><rect x="6.90" y="16.40" width="1.4" height="2.6"/><rect x="19.50" y="16.40" width="1.4" height="2.6"/></g><g fill="#747474" opacity="1"><rect x="6.20" y="4.30" width="2.6" height="1.35"/><rect x="6.20" y="16.95" width="2.6" height="1.35"/><rect x="6.20" y="4.30" width="1.35" height="2.6"/><rect x="18.85" y="4.30" width="1.35" height="2.6"/><rect x="10.00" y="4.30" width="2.6" height="1.35"/><rect x="10.00" y="16.95" width="2.6" height="1.35"/><rect x="6.20" y="8.10" width="1.35" height="2.6"/><rect x="18.85" y="8.10" width="1.35" height="2.6"/><rect x="13.80" y="4.30" width="2.6" height="1.35"/><rect x="13.80" y="16.95" width="2.6" height="1.35"/><rect x="6.20" y="11.90" width="1.35" height="2.6"/><rect x="18.85" y="11.90" width="1.35" height="2.6"/><rect x="17.60" y="4.30" width="2.6" height="1.35"/><rect x="17.60" y="16.95" width="2.6" height="1.35"/><rect x="6.20" y="15.70" width="1.35" height="2.6"/><rect x="18.85" y="15.70" width="1.35" height="2.6"/></g></svg></div><div class="a" style="left:306px;top:766px"><svg width="20" height="20" viewBox="0 0 20 20"><path d="M7.7 7.9 L16.2 16.3 M16.2 7.9 L7.7 16.3" fill="none" stroke="#7d7b78" stroke-width="3.2" stroke-linecap="round"/><path d="M7.7 7.9 L16.2 16.3 M16.2 7.9 L7.7 16.3" fill="none" stroke="#a3a19d" stroke-width="1.6" stroke-linecap="round"/></svg></div>
<i class="cb" style="left:398px;top:771px"></i>
<i class="cb" style="left:546px;top:771px"></i>
<i class="cb" style="left:694px;top:771px"></i>
<i class="cb" style="left:842px;top:771px"></i>
<div class="a" style="left:29px;top:790px;width:231px;height:1px;background:#c5d6ee"></div>
<div class="a" style="left:331px;top:790px;width:593px;height:1px;background:#c5d8f1"></div>
<div class="a hcell" style="left:29px;top:791px;width:17px;height:24px"></div>
<div class="a hcell" style="left:47px;top:791px;width:212px;height:24px"></div>
<div class="a txt" style="left:48px;top:797px">Удаление файлов</div>
<div class="a" style="left:331px;top:791px;width:592px;height:24px;background:#fff"></div>
<div class="a" style="left:263px;top:791px;width:67px;height:24px;border:1px solid #8eaad0;background:#fff"></div>
<div class="a" style="left:285px;top:791px;width:1px;height:24px;background:#8eaad0"></div>
<div class="a" style="left:307px;top:791px;width:1px;height:24px;background:#8eaad0"></div>
<div class="a" style="left:262px;top:791px"><svg width="20" height="20" viewBox="0 0 20 20"><path d="M5.9 12 L10 15.9 L18 8.5" fill="none" stroke="#7f7c77" stroke-width="2.7" stroke-linecap="round" stroke-linejoin="round"/><path d="M5.9 12 L10 15.9 L18 8.5" fill="none" stroke="#a19e99" stroke-width="1.3" stroke-linecap="round" stroke-linejoin="round"/></svg></div><div class="a" style="left:282px;top:791px"><svg width="20" height="20" viewBox="0 0 20 20"><g fill="#aeb3ba" opacity="0.7"><rect x="6.90" y="5.00" width="2.6" height="1.4"/><rect x="6.90" y="17.60" width="2.6" height="1.4"/><rect x="6.90" y="5.00" width="1.4" height="2.6"/><rect x="19.50" y="5.00" width="1.4" height="2.6"/><rect x="10.70" y="5.00" width="2.6" height="1.4"/><rect x="10.70" y="17.60" width="2.6" height="1.4"/><rect x="6.90" y="8.80" width="1.4" height="2.6"/><rect x="19.50" y="8.80" width="1.4" height="2.6"/><rect x="14.50" y="5.00" width="2.6" height="1.4"/><rect x="14.50" y="17.60" width="2.6" height="1.4"/><rect x="6.90" y="12.60" width="1.4" height="2.6"/><rect x="19.50" y="12.60" width="1.4" height="2.6"/><rect x="18.30" y="5.00" width="2.6" height="1.4"/><rect x="18.30" y="17.60" width="2.6" height="1.4"/><rect x="6.90" y="16.40" width="1.4" height="2.6"/><rect x="19.50" y="16.40" width="1.4" height="2.6"/></g><g fill="#747474" opacity="1"><rect x="6.20" y="4.30" width="2.6" height="1.35"/><rect x="6.20" y="16.95" width="2.6" height="1.35"/><rect x="6.20" y="4.30" width="1.35" height="2.6"/><rect x="18.85" y="4.30" width="1.35" height="2.6"/><rect x="10.00" y="4.30" width="2.6" height="1.35"/><rect x="10.00" y="16.95" width="2.6" height="1.35"/><rect x="6.20" y="8.10" width="1.35" height="2.6"/><rect x="18.85" y="8.10" width="1.35" height="2.6"/><rect x="13.80" y="4.30" width="2.6" height="1.35"/><rect x="13.80" y="16.95" width="2.6" height="1.35"/><rect x="6.20" y="11.90" width="1.35" height="2.6"/><rect x="18.85" y="11.90" width="1.35" height="2.6"/><rect x="17.60" y="4.30" width="2.6" height="1.35"/><rect x="17.60" y="16.95" width="2.6" height="1.35"/><rect x="6.20" y="15.70" width="1.35" height="2.6"/><rect x="18.85" y="15.70" width="1.35" height="2.6"/></g></svg></div><div class="a" style="left:306px;top:791px"><svg width="20" height="20" viewBox="0 0 20 20"><path d="M7.7 7.9 L16.2 16.3 M16.2 7.9 L7.7 16.3" fill="none" stroke="#7d7b78" stroke-width="3.2" stroke-linecap="round"/><path d="M7.7 7.9 L16.2 16.3 M16.2 7.9 L7.7 16.3" fill="none" stroke="#a3a19d" stroke-width="1.6" stroke-linecap="round"/></svg></div>
<i class="cb" style="left:398px;top:796px"></i><div class="a" style="left:398px;top:796px"><svg width="14" height="14" viewBox="0 0 14 14"><path d="M3.6 5.8 L6 9.2 L10.2 3.9" fill="none" stroke="#22a322" stroke-width="2" stroke-linecap="round" stroke-linejoin="round"/></svg></div>
<i class="cb" style="left:546px;top:796px"></i><div class="a" style="left:546px;top:796px"><svg width="14" height="14" viewBox="0 0 14 14"><path d="M3.6 5.8 L6 9.2 L10.2 3.9" fill="none" stroke="#22a322" stroke-width="2" stroke-linecap="round" stroke-linejoin="round"/></svg></div>
<i class="cb" style="left:694px;top:796px"></i><div class="a" style="left:694px;top:796px"><svg width="14" height="14" viewBox="0 0 14 14"><path d="M3.6 5.8 L6 9.2 L10.2 3.9" fill="none" stroke="#22a322" stroke-width="2" stroke-linecap="round" stroke-linejoin="round"/></svg></div>
<i class="cb" style="left:842px;top:796px"></i><div class="a" style="left:842px;top:796px"><svg width="14" height="14" viewBox="0 0 14 14"><path d="M3.6 5.8 L6 9.2 L10.2 3.9" fill="none" stroke="#22a322" stroke-width="2" stroke-linecap="round" stroke-linejoin="round"/></svg></div>
<div class="a" style="left:29px;top:815px;width:231px;height:1px;background:#c5d6ee"></div>
<div class="a" style="left:331px;top:815px;width:593px;height:1px;background:#c5d8f1"></div>
<div class="a hcell" style="left:29px;top:816px;width:17px;height:24px"></div>
<div class="a hcell" style="left:47px;top:816px;width:212px;height:24px"></div>
<div class="a txt" style="left:48px;top:822px">Удалить Документ из Дела</div>
<div class="a" style="left:331px;top:816px;width:592px;height:24px;background:#faf9f2"></div>
<div class="a" style="left:263px;top:816px;width:67px;height:24px;border:1px solid #8eaad0;background:#faf9f2"></div>
<div class="a" style="left:285px;top:816px;width:1px;height:24px;background:#8eaad0"></div>
<div class="a" style="left:307px;top:816px;width:1px;height:24px;background:#8eaad0"></div>
<div class="a" style="left:262px;top:816px"><svg width="20" height="20" viewBox="0 0 20 20"><path d="M5.9 12 L10 15.9 L18 8.5" fill="none" stroke="#7f7c77" stroke-width="2.7" stroke-linecap="round" stroke-linejoin="round"/><path d="M5.9 12 L10 15.9 L18 8.5" fill="none" stroke="#a19e99" stroke-width="1.3" stroke-linecap="round" stroke-linejoin="round"/></svg></div><div class="a" style="left:282px;top:816px"><svg width="20" height="20" viewBox="0 0 20 20"><g fill="#aeb3ba" opacity="0.7"><rect x="6.90" y="5.00" width="2.6" height="1.4"/><rect x="6.90" y="17.60" width="2.6" height="1.4"/><rect x="6.90" y="5.00" width="1.4" height="2.6"/><rect x="19.50" y="5.00" width="1.4" height="2.6"/><rect x="10.70" y="5.00" width="2.6" height="1.4"/><rect x="10.70" y="17.60" width="2.6" height="1.4"/><rect x="6.90" y="8.80" width="1.4" height="2.6"/><rect x="19.50" y="8.80" width="1.4" height="2.6"/><rect x="14.50" y="5.00" width="2.6" height="1.4"/><rect x="14.50" y="17.60" width="2.6" height="1.4"/><rect x="6.90" y="12.60" width="1.4" height="2.6"/><rect x="19.50" y="12.60" width="1.4" height="2.6"/><rect x="18.30" y="5.00" width="2.6" height="1.4"/><rect x="18.30" y="17.60" width="2.6" height="1.4"/><rect x="6.90" y="16.40" width="1.4" height="2.6"/><rect x="19.50" y="16.40" width="1.4" height="2.6"/></g><g fill="#747474" opacity="1"><rect x="6.20" y="4.30" width="2.6" height="1.35"/><rect x="6.20" y="16.95" width="2.6" height="1.35"/><rect x="6.20" y="4.30" width="1.35" height="2.6"/><rect x="18.85" y="4.30" width="1.35" height="2.6"/><rect x="10.00" y="4.30" width="2.6" height="1.35"/><rect x="10.00" y="16.95" width="2.6" height="1.35"/><rect x="6.20" y="8.10" width="1.35" height="2.6"/><rect x="18.85" y="8.10" width="1.35" height="2.6"/><rect x="13.80" y="4.30" width="2.6" height="1.35"/><rect x="13.80" y="16.95" width="2.6" height="1.35"/><rect x="6.20" y="11.90" width="1.35" height="2.6"/><rect x="18.85" y="11.90" width="1.35" height="2.6"/><rect x="17.60" y="4.30" width="2.6" height="1.35"/><rect x="17.60" y="16.95" width="2.6" height="1.35"/><rect x="6.20" y="15.70" width="1.35" height="2.6"/><rect x="18.85" y="15.70" width="1.35" height="2.6"/></g></svg></div><div class="a" style="left:306px;top:816px"><svg width="20" height="20" viewBox="0 0 20 20"><path d="M7.7 7.9 L16.2 16.3 M16.2 7.9 L7.7 16.3" fill="none" stroke="#7d7b78" stroke-width="3.2" stroke-linecap="round"/><path d="M7.7 7.9 L16.2 16.3 M16.2 7.9 L7.7 16.3" fill="none" stroke="#a3a19d" stroke-width="1.6" stroke-linecap="round"/></svg></div>
<i class="cb" style="left:398px;top:821px"></i><div class="a" style="left:398px;top:821px"><svg width="14" height="14" viewBox="0 0 14 14"><path d="M3.6 5.8 L6 9.2 L10.2 3.9" fill="none" stroke="#22a322" stroke-width="2" stroke-linecap="round" stroke-linejoin="round"/></svg></div>
<i class="cb" style="left:546px;top:821px"></i><div class="a" style="left:546px;top:821px"><svg width="14" height="14" viewBox="0 0 14 14"><path d="M3.6 5.8 L6 9.2 L10.2 3.9" fill="none" stroke="#22a322" stroke-width="2" stroke-linecap="round" stroke-linejoin="round"/></svg></div>
<i class="cb" style="left:694px;top:821px"></i><div class="a" style="left:694px;top:821px"><svg width="14" height="14" viewBox="0 0 14 14"><path d="M3.6 5.8 L6 9.2 L10.2 3.9" fill="none" stroke="#22a322" stroke-width="2" stroke-linecap="round" stroke-linejoin="round"/></svg></div>
<i class="cb" style="left:842px;top:821px"></i><div class="a" style="left:842px;top:821px"><svg width="14" height="14" viewBox="0 0 14 14"><path d="M3.6 5.8 L6 9.2 L10.2 3.9" fill="none" stroke="#22a322" stroke-width="2" stroke-linecap="round" stroke-linejoin="round"/></svg></div>
<div class="a" style="left:478px;top:241px;width:1px;height:598px;background:#c5d8f1"></div>
<div class="a" style="left:626px;top:241px;width:1px;height:598px;background:#c5d8f1"></div>
<div class="a" style="left:774px;top:241px;width:1px;height:598px;background:#c5d8f1"></div>
<div class="a" style="left:923px;top:241px;width:1px;height:598px;background:#c5d8f1"></div>
<div class="a" style="left:923px;top:191px;width:1px;height:648px;background:#c5d8f1"></div><div class="a" style="left:923px;top:191px;width:1px;height:50px;background:#7896c2"></div>
<div class="a" style="left:1341px;top:216px;width:21px;height:623px;background:linear-gradient(90deg,#cddbee,#dce6f4)"></div>
<div class="a" style="left:1346px;top:224px;width:0;height:0;border-left:5px solid transparent;border-right:5px solid transparent;border-bottom:5px solid #4f5d83"></div>
<div class="a" style="left:1342px;top:237px;width:19px;height:449px;border:1px solid #8eaad0;border-radius:2px;background:linear-gradient(90deg,#e8eff9,#d5e1f1)"></div>
<div class="a" style="left:1348px;top:458px;width:7px;height:1px;background:#7896c2"></div>
<div class="a" style="left:1348px;top:460px;width:7px;height:1px;background:#7896c2"></div>
<div class="a" style="left:1348px;top:462px;width:7px;height:1px;background:#7896c2"></div>
<div class="a" style="left:1348px;top:464px;width:7px;height:1px;background:#7896c2"></div>
<div class="a" style="left:1346px;top:827px;width:0;height:0;border-left:5px solid transparent;border-right:5px solid transparent;border-top:5px solid #4f5d83"></div>
<div class="a" style="left:28px;top:840px;width:1335px;height:6px;background:#fff"></div>
<div class="a gridb"></div>
<div class="a" style="left:28px;top:846px;width:1335px;height:76px;border:1px solid #7f9cc6;border-radius:2px;background:#cfdcee"></div>
<div class="a" style="left:29px;top:847px;width:1333px;height:24px;background:linear-gradient(#d6e3f5,#c9daf1);border-bottom:1px solid #b3c8e4"></div>
<div class="a" style="left:42px;top:852px;font-size:12.5px;color:#1e395b">Ролевой фильтр</div>
<div class="a" style="left:44px;top:889px;width:12px;height:12px;border:1px solid #c3cfdf;background:#e5ebf3"></div>
<div class="a" style="left:60px;top:888px;font-size:12.5px;color:#8d9bb0;letter-spacing:0.2px">Включить фильтр ролей</div>
<div class="a" style="left:318px;top:890px;font-size:12.5px;color:#1e395b;letter-spacing:0.2px">Сотрудник:</div>
<div class="a edit" style="left:402px;top:885px;width:427px;height:22px"></div>
<div class="a btn" style="left:788px;top:886px;width:20px;height:20px"><i class="dot" style="left:4px;top:9px"></i><i class="dot" style="left:8px;top:9px"></i><i class="dot" style="left:12px;top:9px"></i></div>
<div class="a" style="left:808px;top:886px;width:1px;height:20px;background:#a9bfdc"></div>
<div class="a" style="left:814px;top:892px"><svg width="9" height="7" viewBox="0 0 9 7"><path d="M1 1 L8 6 M8 1 L1 6" stroke="#b0b0b0" stroke-width="1.3"/></svg></div>
<div class="a" style="left:834px;top:890px;font-size:12.5px;color:#1e395b;letter-spacing:0.35px">Карточка:</div>
<div class="a edit" style="left:918px;top:885px;width:430px;height:22px"></div>
<div class="a btn" style="left:1287px;top:886px;width:20px;height:20px"><i class="dot" style="left:4px;top:9px"></i><i class="dot" style="left:8px;top:9px"></i><i class="dot" style="left:12px;top:9px"></i></div>
<div class="a" style="left:1307px;top:886px;width:1px;height:20px;background:#a9bfdc"></div>
<div class="a" style="left:1313px;top:892px"><svg width="9" height="7" viewBox="0 0 9 7"><path d="M1 1 L8 6 M8 1 L1 6" stroke="#b0b0b0" stroke-width="1.3"/></svg></div>
<div class="a" style="left:1327px;top:886px;width:1px;height:20px;background:#a9bfdc"></div>
<div class="a" style="left:1330px;top:890px;width:14px;height:11px;border:1px solid #9a9a9a;border-radius:2px;background:linear-gradient(#dadada,#c4c4c4)"><svg class="a" style="left:3px;top:1px" width="8" height="8" viewBox="0 0 8 8"><circle cx="4.6" cy="3.4" r="2.3" fill="none" stroke="#f2f2f2" stroke-width="1"/><path d="M3 5 L1 7" stroke="#f2f2f2" stroke-width="1.2"/></svg></div>
<div class="a" style="left:10px;top:940px;width:1371px;height:37px;background:linear-gradient(#e1eaf6,#cad9ec 60%,#b9cbe2);border-top:1px solid #7f9cc6;border-bottom:1px solid #6886ae"></div>
<div class="a" style="left:265px;top:944px;width:1px;height:30px;background:#c5d3e6"></div>
<div class="a" style="left:24px;top:952px;width:17px;height:15px"><svg width="17" height="15" viewBox="0 0 17 15"><defs><linearGradient id="fo" x1="0" y1="0" x2="0" y2="1"><stop offset="0" stop-color="#f8d978"/><stop offset="1" stop-color="#f0b636"/></linearGradient></defs><path d="M0.2 1.2 Q0.2 0.2 1.2 0.2 L7 0.2 Q7.8 0.2 8 1 L8.3 2.6 L15.8 2.6 Q16.8 2.6 16.8 3.6 L16.8 13.4 Q16.8 14.2 16 14.2 L1 14.2 Q0.2 14.2 0.2 13.4 Z" fill="#ef9a1e"/><path d="M1.5 6.2 L6.8 6.2 L8.8 4 L15.6 4 L15.6 12.8 L1.5 12.8 Z" fill="url(#fo)"/><rect x="1.5" y="1.5" width="5" height="2.5" fill="#f6c23a"/></svg></div>
<div class="a lbl15" style="left:46px;top:951px;letter-spacing:0.25px">Конструкторы и справочники</div>
<div class="a" style="left:7px;top:36px;width:1377px;height:1px;background:#6886ae"></div>
<div class="a" style="left:7px;top:976px;width:1377px;height:1px;background:#6886ae"></div>
<div class="a" style="left:1px;top:1px;width:1389px;height:984px;border:1px solid #d6e3f3;pointer-events:none"></div>
<div id="wb"></div></div></body></html>
